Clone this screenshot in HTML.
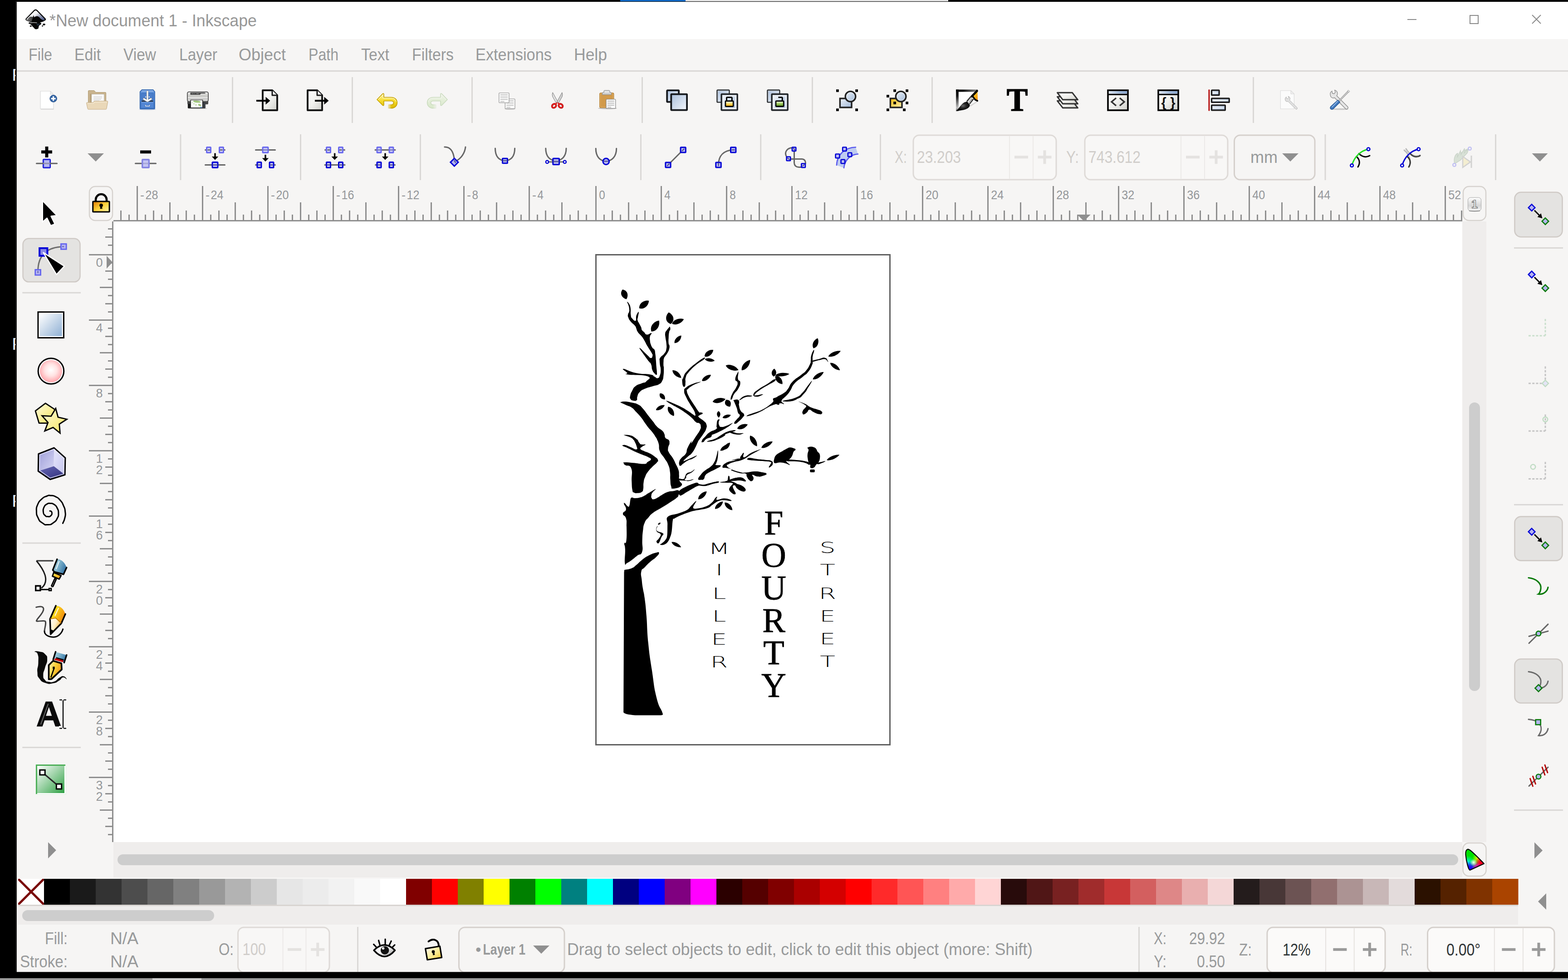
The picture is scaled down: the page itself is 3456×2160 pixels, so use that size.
<!DOCTYPE html>
<html lang="en"><head><meta charset="utf-8"><title>*New document 1 - Inkscape</title>
<style>
html,body{margin:0;padding:0;background:#000;width:3456px;height:2160px;overflow:hidden}
svg{display:block;font-family:"Liberation Sans", "DejaVu Sans", sans-serif}
</style></head>
<body>
<svg width="3456" height="2160" viewBox="0 0 3456 2160">
<defs>
<clipPath id="leftclip"><rect x="0" y="0" width="37" height="2160"/></clipPath>
<clipPath id="xclip"><rect x="40" y="1937" width="57" height="57"/></clipPath>

<linearGradient id="gBlue" x1="0" y1="0" x2="1" y2="1"><stop offset="0" stop-color="#a9bfdc"/><stop offset="1" stop-color="#f3f6fb"/></linearGradient>
<linearGradient id="gBlueR" x1="0" y1="0" x2="1" y2="1"><stop offset="0" stop-color="#eef3f9"/><stop offset="1" stop-color="#9fb7d6"/></linearGradient>
<linearGradient id="gPaper" x1="0" y1="0" x2="1" y2="1"><stop offset="0" stop-color="#ffffff"/><stop offset="0.5" stop-color="#f1f1ee"/><stop offset="1" stop-color="#cfcfca"/></linearGradient>
<linearGradient id="gYel" x1="0" y1="0" x2="0" y2="1"><stop offset="0" stop-color="#fff6a0"/><stop offset="0.5" stop-color="#f7dc2e"/><stop offset="1" stop-color="#d9b600"/></linearGradient>
<linearGradient id="gGrn" x1="0" y1="0" x2="0" y2="1"><stop offset="0" stop-color="#d9f0c0"/><stop offset="1" stop-color="#8ec860"/></linearGradient>
<linearGradient id="gLockY" x1="0" y1="0" x2="1" y2="1"><stop offset="0" stop-color="#e07800"/><stop offset="0.5" stop-color="#fdd23a"/><stop offset="1" stop-color="#fff6a8"/></linearGradient>
<linearGradient id="gLockS" x1="0" y1="0" x2="0" y2="1"><stop offset="0" stop-color="#ffffff"/><stop offset="0.45" stop-color="#ffe27a"/><stop offset="1" stop-color="#f5a800"/></linearGradient>
<linearGradient id="gLockG" x1="0" y1="0" x2="0" y2="1"><stop offset="0" stop-color="#ffffff"/><stop offset="0.45" stop-color="#a9d36b"/><stop offset="1" stop-color="#4e8a1a"/></linearGradient>
<linearGradient id="gYelSq" x1="0" y1="0" x2="1" y2="1"><stop offset="0" stop-color="#f3b90a"/><stop offset="1" stop-color="#ffefb0"/></linearGradient>
<linearGradient id="gFrame" x1="0" y1="0" x2="1" y2="0.75"><stop offset="0" stop-color="#000"/><stop offset="0.5" stop-color="#050505"/><stop offset="0.8" stop-color="#8a8a8a"/><stop offset="1" stop-color="#e8e8e8"/></linearGradient>
<linearGradient id="gFrT" x1="0" y1="0" x2="1" y2="0"><stop offset="0" stop-color="#000"/><stop offset="0.3" stop-color="#0a0a0a"/><stop offset="1" stop-color="#8c8c8c"/></linearGradient>
<linearGradient id="gFrL" x1="0" y1="0" x2="0" y2="1"><stop offset="0" stop-color="#000"/><stop offset="0.3" stop-color="#1a1a1a"/><stop offset="0.85" stop-color="#c4c4c4"/><stop offset="1" stop-color="#555"/></linearGradient>
<linearGradient id="gOrange2" x1="0" y1="0" x2="1" y2="1"><stop offset="0" stop-color="#ffe92a"/><stop offset="0.5" stop-color="#fbb81a"/><stop offset="1" stop-color="#f58a0a"/></linearGradient>
<linearGradient id="gFerr" x1="0" y1="0" x2="1" y2="0.6"><stop offset="0" stop-color="#555"/><stop offset="0.35" stop-color="#f0f0f0"/><stop offset="0.7" stop-color="#9a9a9a"/><stop offset="1" stop-color="#222"/></linearGradient>
<radialGradient id="gBrush" cx="0.5" cy="0.45" r="0.5"><stop offset="0" stop-color="#6a6a6a"/><stop offset="0.45" stop-color="#2a2a2a"/><stop offset="1" stop-color="#050505"/></radialGradient>
<linearGradient id="gPrn" x1="0" y1="0" x2="0" y2="1"><stop offset="0" stop-color="#f0f0f0"/><stop offset="0.45" stop-color="#c6c6c2"/><stop offset="0.62" stop-color="#e4e4e2"/><stop offset="1" stop-color="#bdbdbb"/></linearGradient>
<linearGradient id="gTitle" x1="0" y1="0" x2="1" y2="0"><stop offset="0" stop-color="#dfe8f4"/><stop offset="0.6" stop-color="#9db6d8"/><stop offset="1" stop-color="#8aa7cf"/></linearGradient>
<linearGradient id="gRectTool" x1="0" y1="0" x2="1" y2="1"><stop offset="0" stop-color="#ffffff"/><stop offset="1" stop-color="#8fb0d4"/></linearGradient>
<radialGradient id="gCirc" cx="0.5" cy="0.45" r="0.6"><stop offset="0" stop-color="#ffffff"/><stop offset="0.45" stop-color="#ffe3e3"/><stop offset="1" stop-color="#ff9aa2"/></radialGradient>
<linearGradient id="gStar" x1="0" y1="0" x2="1" y2="1"><stop offset="0" stop-color="#fffde0"/><stop offset="1" stop-color="#f5e25a"/></linearGradient>
<linearGradient id="gGrad" x1="0" y1="0" x2="1" y2="1"><stop offset="0" stop-color="#ffffff"/><stop offset="1" stop-color="#2ea043"/></linearGradient>
<linearGradient id="gMetal" x1="0" y1="0" x2="1" y2="0"><stop offset="0" stop-color="#f2f2f2"/><stop offset="1" stop-color="#a8a8a8"/></linearGradient>
<linearGradient id="gBtn" x1="0" y1="0" x2="0" y2="1"><stop offset="0" stop-color="#ffffff"/><stop offset="1" stop-color="#cfcfcf"/></linearGradient>
<linearGradient id="gFade" x1="0" y1="0" x2="1" y2="0"><stop offset="0" stop-color="#f6f5f4" stop-opacity="1"/><stop offset="1" stop-color="#f6f5f4" stop-opacity="0"/></linearGradient>
<linearGradient id="gSky" x1="0" y1="0" x2="1" y2="1"><stop offset="0" stop-color="#cfe6f2"/><stop offset="1" stop-color="#4e8fb0"/></linearGradient>
<linearGradient id="gSkyH" x1="0" y1="0" x2="1" y2="0.4"><stop offset="0" stop-color="#b5dbe6"/><stop offset="0.5" stop-color="#7fb4cc"/><stop offset="1" stop-color="#3a78a8"/></linearGradient>
<linearGradient id="gPencil" x1="0" y1="0" x2="1" y2="0.5"><stop offset="0" stop-color="#f4ff2a"/><stop offset="0.45" stop-color="#fbd21a"/><stop offset="1" stop-color="#f08a10"/></linearGradient>
<linearGradient id="gWood" x1="0" y1="0" x2="1" y2="0.6"><stop offset="0" stop-color="#ffffff"/><stop offset="0.5" stop-color="#fff0c8"/><stop offset="1" stop-color="#f5a81a"/></linearGradient>
<linearGradient id="gNib" x1="0" y1="0" x2="1" y2="0.5"><stop offset="0" stop-color="#fff8c0"/><stop offset="0.5" stop-color="#fbd23a"/><stop offset="1" stop-color="#f09a1a"/></linearGradient>
<linearGradient id="gOrange" x1="0" y1="0" x2="1" y2="1"><stop offset="0" stop-color="#fff35a"/><stop offset="1" stop-color="#f09000"/></linearGradient>
<linearGradient id="gBoxL" x1="0" y1="0" x2="1" y2="1"><stop offset="0" stop-color="#9a9ad6"/><stop offset="1" stop-color="#d6d6f4"/></linearGradient>
<linearGradient id="gBoxR" x1="0" y1="0" x2="1" y2="1"><stop offset="0" stop-color="#e6e6fb"/><stop offset="1" stop-color="#c4c4ee"/></linearGradient>
<linearGradient id="gBoxB" x1="0" y1="0" x2="1" y2="1"><stop offset="0" stop-color="#6a6ab8"/><stop offset="1" stop-color="#2c2c78"/></linearGradient>

<linearGradient id="gLogoG" x1="0" y1="0" x2="1" y2="0"><stop offset="0" stop-color="#7a7a7a"/><stop offset="1" stop-color="#3a3a3a"/></linearGradient>
<linearGradient id="gLogo" x1="0.1" y1="0.2" x2="1" y2="0.9"><stop offset="0" stop-color="#ffffff"/><stop offset="0.35" stop-color="#f2f2f4"/><stop offset="0.6" stop-color="#9aa0b8"/><stop offset="0.85" stop-color="#5a6690"/><stop offset="1" stop-color="#222838"/></linearGradient>
<linearGradient id="gBtn1" x1="0" y1="0" x2="0" y2="1"><stop offset="0" stop-color="#fdfdfd"/><stop offset="0.6" stop-color="#d6d6d6"/><stop offset="1" stop-color="#f6f6f6"/></linearGradient>
<radialGradient id="rCy"><stop offset="0" stop-color="#00ffff"/><stop offset="1" stop-color="#00ffff" stop-opacity="0"/></radialGradient>
<radialGradient id="rYe"><stop offset="0" stop-color="#ffff00"/><stop offset="1" stop-color="#ffff00" stop-opacity="0"/></radialGradient>
<radialGradient id="rRe"><stop offset="0" stop-color="#ff0020"/><stop offset="0.5" stop-color="#ff0020"/><stop offset="1" stop-color="#ff0020" stop-opacity="0"/></radialGradient>
<radialGradient id="rBl"><stop offset="0" stop-color="#1000ff"/><stop offset="0.45" stop-color="#2010ff"/><stop offset="1" stop-color="#2010ff" stop-opacity="0"/></radialGradient>
<radialGradient id="rMa"><stop offset="0" stop-color="#ff00e0"/><stop offset="1" stop-color="#ff00e0" stop-opacity="0"/></radialGradient>
<radialGradient id="rWh"><stop offset="0" stop-color="#ffffff"/><stop offset="1" stop-color="#ffffff" stop-opacity="0"/></radialGradient>
<linearGradient id="gEye" x1="0" y1="0" x2="1" y2="1"><stop offset="0" stop-color="#ffffff"/><stop offset="0.5" stop-color="#f0f0f0"/><stop offset="1" stop-color="#8a8a8a"/></linearGradient>
<linearGradient id="gLockO" x1="0" y1="0" x2="1" y2="1"><stop offset="0" stop-color="#ffffff"/><stop offset="0.6" stop-color="#fbe88a"/><stop offset="1" stop-color="#eec22a"/></linearGradient>
<linearGradient id="gCms" x1="0" y1="0" x2="1" y2="0"><stop offset="0" stop-color="#00d000"/><stop offset="0.35" stop-color="#30ff30"/><stop offset="0.6" stop-color="#ffff40"/><stop offset="0.8" stop-color="#ff3030"/><stop offset="1" stop-color="#d000d0"/></linearGradient>
<linearGradient id="gCms2" x1="0" y1="0" x2="0" y2="1"><stop offset="0" stop-color="#00c000" stop-opacity="0.9"/><stop offset="0.55" stop-color="#ffffff" stop-opacity="0.3"/><stop offset="1" stop-color="#1020ff" stop-opacity="1"/></linearGradient>

</defs>
<rect x="0" y="0" width="3456" height="2160" fill="#000" />
<rect x="1367" y="0" width="144" height="3" fill="#1168c4" />
<rect x="1511" y="0" width="579" height="3" fill="#e4e4e4" />
<text x="26.5" y="177.7" font-size="36" fill="#fff" font-family='"Liberation Sans", "DejaVu Sans", sans-serif' clip-path="url(#leftclip)">F</text>
<text x="26.5" y="771" font-size="36" fill="#fff" font-family='"Liberation Sans", "DejaVu Sans", sans-serif' clip-path="url(#leftclip)">F</text>
<text x="26.5" y="1116.7" font-size="36" fill="#fff" font-family='"Liberation Sans", "DejaVu Sans", sans-serif' clip-path="url(#leftclip)">F</text>
<rect x="34" y="3" width="3" height="2142" fill="#1c1c1c" />
<rect x="37" y="4" width="3419" height="82" fill="#fff" />
<rect x="37" y="86" width="3419" height="2057" fill="#f6f5f4" />
<rect x="37" y="155" width="3419" height="3" fill="#dad8d6" />
<text x="109" y="58" font-size="36" fill="#979797" textLength="457" lengthAdjust="spacingAndGlyphs" font-family='"Liberation Sans", "DejaVu Sans", sans-serif' >*New document 1 - Inkscape</text>
<rect x="3102" y="42" width="20" height="2" fill="#8a8a8a" />
<rect x="3240" y="34" width="18" height="18" fill="none" stroke="#8a8a8a" stroke-width="2" />
<path d="M3377 33 L3396 52 M3396 33 L3377 52" fill="none" stroke="#8a8a8a" stroke-width="2" />
<text x="63" y="133" font-size="36" fill="#989a9b" textLength="52" lengthAdjust="spacingAndGlyphs" font-family='"Liberation Sans", "DejaVu Sans", sans-serif' >File</text>
<text x="164" y="133" font-size="36" fill="#989a9b" textLength="58" lengthAdjust="spacingAndGlyphs" font-family='"Liberation Sans", "DejaVu Sans", sans-serif' >Edit</text>
<text x="272" y="133" font-size="36" fill="#989a9b" textLength="72" lengthAdjust="spacingAndGlyphs" font-family='"Liberation Sans", "DejaVu Sans", sans-serif' >View</text>
<text x="395" y="133" font-size="36" fill="#989a9b" textLength="84" lengthAdjust="spacingAndGlyphs" font-family='"Liberation Sans", "DejaVu Sans", sans-serif' >Layer</text>
<text x="526" y="133" font-size="36" fill="#989a9b" textLength="104" lengthAdjust="spacingAndGlyphs" font-family='"Liberation Sans", "DejaVu Sans", sans-serif' >Object</text>
<text x="680" y="133" font-size="36" fill="#989a9b" textLength="66" lengthAdjust="spacingAndGlyphs" font-family='"Liberation Sans", "DejaVu Sans", sans-serif' >Path</text>
<text x="796" y="133" font-size="36" fill="#989a9b" textLength="62" lengthAdjust="spacingAndGlyphs" font-family='"Liberation Sans", "DejaVu Sans", sans-serif' >Text</text>
<text x="908" y="133" font-size="36" fill="#989a9b" textLength="92" lengthAdjust="spacingAndGlyphs" font-family='"Liberation Sans", "DejaVu Sans", sans-serif' >Filters</text>
<text x="1048" y="133" font-size="36" fill="#989a9b" textLength="168" lengthAdjust="spacingAndGlyphs" font-family='"Liberation Sans", "DejaVu Sans", sans-serif' >Extensions</text>
<text x="1265" y="133" font-size="36" fill="#989a9b" textLength="73" lengthAdjust="spacingAndGlyphs" font-family='"Liberation Sans", "DejaVu Sans", sans-serif' >Help</text>
<rect x="511.0" y="170" width="3" height="101" fill="#dad8d6" />
<rect x="775.0" y="170" width="3" height="101" fill="#dad8d6" />
<rect x="1039.0" y="170" width="3" height="101" fill="#dad8d6" />
<rect x="1414.0" y="170" width="3" height="101" fill="#dad8d6" />
<rect x="1789.0" y="170" width="3" height="101" fill="#dad8d6" />
<rect x="2053.0" y="170" width="3" height="101" fill="#dad8d6" />
<rect x="2761.0" y="170" width="3" height="101" fill="#dad8d6" />
<rect x="396.5" y="296" width="3" height="101" fill="#dad8d6" />
<rect x="661.0" y="296" width="3" height="101" fill="#dad8d6" />
<rect x="925.0" y="296" width="3" height="101" fill="#dad8d6" />
<rect x="1411.0" y="296" width="3" height="101" fill="#dad8d6" />
<rect x="1675.2" y="296" width="3" height="101" fill="#dad8d6" />
<rect x="1939.0" y="296" width="3" height="101" fill="#dad8d6" />
<rect x="2919.5" y="296" width="3" height="101" fill="#dad8d6" />
<rect x="3295.0" y="296" width="3" height="101" fill="#dad8d6" />
<text x="1972" y="359" font-size="36" fill="#d0cdca" textLength="27" lengthAdjust="spacingAndGlyphs" font-family='"Liberation Sans", "DejaVu Sans", sans-serif' >X:</text>
<rect x="2013" y="298" width="315" height="98" fill="#f8f7f6" rx="13" stroke="#dedad7" stroke-width="3" />
<rect x="2224" y="299" width="2" height="96" fill="#eceae8" />
<rect x="2276" y="299" width="2" height="96" fill="#eceae8" />
<text x="2021" y="359" font-size="36" fill="#d0cdca" textLength="97" lengthAdjust="spacingAndGlyphs" font-family='"Liberation Sans", "DejaVu Sans", sans-serif' >23.203</text>
<rect x="2236.0" y="343.3" width="30" height="6" fill="#e4e2e0" />
<rect x="2287.5" y="343.3" width="30" height="6" fill="#e4e2e0" />
<rect x="2299.5" y="331.3" width="6" height="30" fill="#e4e2e0" />
<text x="2350" y="359" font-size="36" fill="#d0cdca" textLength="28" lengthAdjust="spacingAndGlyphs" font-family='"Liberation Sans", "DejaVu Sans", sans-serif' >Y:</text>
<rect x="2391" y="298" width="315" height="98" fill="#f8f7f6" rx="13" stroke="#dedad7" stroke-width="3" />
<rect x="2602" y="299" width="2" height="96" fill="#eceae8" />
<rect x="2654" y="299" width="2" height="96" fill="#eceae8" />
<text x="2399" y="359" font-size="36" fill="#d0cdca" textLength="115" lengthAdjust="spacingAndGlyphs" font-family='"Liberation Sans", "DejaVu Sans", sans-serif' >743.612</text>
<rect x="2614.0" y="343.3" width="30" height="6" fill="#e4e2e0" />
<rect x="2665.5" y="343.3" width="30" height="6" fill="#e4e2e0" />
<rect x="2677.5" y="331.3" width="6" height="30" fill="#e4e2e0" />
<rect x="2720.5" y="298" width="177.5" height="98" fill="#f6f5f4" rx="13" stroke="#d5d0cc" stroke-width="3" />
<text x="2756" y="359" font-size="36" fill="#989a9b" textLength="60" lengthAdjust="spacingAndGlyphs" font-family='"Liberation Sans", "DejaVu Sans", sans-serif' >mm</text>
<path d="M2826 338 h36 l-18 18z" fill="#8f8f8f" />
<rect x="250" y="488" width="2973" height="1368" fill="#fff" />
<rect x="250" y="485" width="2973" height="3" fill="#8f8f8f" />
<rect x="247" y="488" width="3" height="1368" fill="#8f8f8f" />
<rect x="197" y="411" width="51" height="75" fill="#f6f5f4" rx="13" stroke="#d6d2ce" stroke-width="2.5" />
<path d="M266.5 464V486M284.5 473V486M302.5 410V486M320.5 473V486M338.5 464V486M356.5 473V486M374.5 446V486M392.5 473V486M410.5 464V486M428.5 473V486M446.5 410V486M464.5 473V486M482.5 464V486M500.5 473V486M518.5 446V486M536.5 473V486M554.5 464V486M572.5 473V486M590.5 410V486M608.5 473V486M626.5 464V486M644.5 473V486M662.5 446V486M680.5 473V486M698.5 464V486M716.5 473V486M734.5 410V486M752.5 473V486M770.5 464V486M788.5 473V486M806.5 446V486M824.5 473V486M842.5 464V486M860.5 473V486M878.5 410V486M896.5 473V486M914.5 464V486M932.5 473V486M950.5 446V486M968.5 473V486M986.5 464V486M1004.5 473V486M1022.5 410V486M1040.5 473V486M1058.5 464V486M1076.5 473V486M1094.5 446V486M1112.5 473V486M1130.5 464V486M1148.5 473V486M1166.5 410V486M1184.5 473V486M1202.5 464V486M1220.5 473V486M1238.5 446V486M1256.5 473V486M1274.5 464V486M1292.5 473V486M1313.5 410V486M1331.5 473V486M1349.5 464V486M1367.5 473V486M1385.5 446V486M1403.5 473V486M1421.5 464V486M1439.5 473V486M1457.5 410V486M1475.5 473V486M1493.5 464V486M1511.5 473V486M1529.5 446V486M1547.5 473V486M1565.5 464V486M1583.5 473V486M1601.5 410V486M1619.5 473V486M1637.5 464V486M1655.5 473V486M1673.5 446V486M1691.5 473V486M1709.5 464V486M1727.5 473V486M1745.5 410V486M1763.5 473V486M1781.5 464V486M1799.5 473V486M1817.5 446V486M1835.5 473V486M1853.5 464V486M1871.5 473V486M1889.5 410V486M1907.5 473V486M1925.5 464V486M1943.5 473V486M1961.5 446V486M1979.5 473V486M1997.5 464V486M2015.5 473V486M2033.5 410V486M2051.5 473V486M2069.5 464V486M2087.5 473V486M2105.5 446V486M2123.5 473V486M2141.5 464V486M2159.5 473V486M2177.5 410V486M2195.5 473V486M2213.5 464V486M2231.5 473V486M2249.5 446V486M2267.5 473V486M2285.5 464V486M2303.5 473V486M2321.5 410V486M2339.5 473V486M2357.5 464V486M2375.5 473V486M2393.5 446V486M2411.5 473V486M2429.5 464V486M2447.5 473V486M2465.5 410V486M2483.5 473V486M2501.5 464V486M2519.5 473V486M2537.5 446V486M2555.5 473V486M2573.5 464V486M2591.5 473V486M2609.5 410V486M2627.5 473V486M2645.5 464V486M2663.5 473V486M2681.5 446V486M2699.5 473V486M2717.5 464V486M2735.5 473V486M2753.5 410V486M2771.5 473V486M2789.5 464V486M2807.5 473V486M2825.5 446V486M2843.5 473V486M2861.5 464V486M2879.5 473V486M2897.5 410V486M2915.5 473V486M2933.5 464V486M2951.5 473V486M2969.5 446V486M2987.5 473V486M3005.5 464V486M3023.5 473V486M3041.5 410V486M3059.5 473V486M3077.5 464V486M3095.5 473V486M3113.5 446V486M3131.5 473V486M3149.5 464V486M3167.5 473V486M3185.5 410V486M3203.5 473V486M3221.5 464V486" fill="none" stroke="#8f8f8f" stroke-width="3" />
<text x="309.0" y="438.8" font-size="27" fill="#94979a" font-family='"Liberation Sans", "DejaVu Sans", sans-serif' >-</text>
<text x="320.5" y="438.8" font-size="27" fill="#94979a" textLength="28.0" lengthAdjust="spacingAndGlyphs" font-family='"Liberation Sans", "DejaVu Sans", sans-serif' >28</text>
<text x="453.0" y="438.8" font-size="27" fill="#94979a" font-family='"Liberation Sans", "DejaVu Sans", sans-serif' >-</text>
<text x="464.5" y="438.8" font-size="27" fill="#94979a" textLength="28.0" lengthAdjust="spacingAndGlyphs" font-family='"Liberation Sans", "DejaVu Sans", sans-serif' >24</text>
<text x="597.0" y="438.8" font-size="27" fill="#94979a" font-family='"Liberation Sans", "DejaVu Sans", sans-serif' >-</text>
<text x="608.5" y="438.8" font-size="27" fill="#94979a" textLength="28.0" lengthAdjust="spacingAndGlyphs" font-family='"Liberation Sans", "DejaVu Sans", sans-serif' >20</text>
<text x="741.0" y="438.8" font-size="27" fill="#94979a" font-family='"Liberation Sans", "DejaVu Sans", sans-serif' >-</text>
<text x="752.5" y="438.8" font-size="27" fill="#94979a" textLength="28.0" lengthAdjust="spacingAndGlyphs" font-family='"Liberation Sans", "DejaVu Sans", sans-serif' >16</text>
<text x="885.0" y="438.8" font-size="27" fill="#94979a" font-family='"Liberation Sans", "DejaVu Sans", sans-serif' >-</text>
<text x="896.5" y="438.8" font-size="27" fill="#94979a" textLength="28.0" lengthAdjust="spacingAndGlyphs" font-family='"Liberation Sans", "DejaVu Sans", sans-serif' >12</text>
<text x="1029.0" y="438.8" font-size="27" fill="#94979a" font-family='"Liberation Sans", "DejaVu Sans", sans-serif' >-</text>
<text x="1040.5" y="438.8" font-size="27" fill="#94979a" textLength="13.5" lengthAdjust="spacingAndGlyphs" font-family='"Liberation Sans", "DejaVu Sans", sans-serif' >8</text>
<text x="1173.0" y="438.8" font-size="27" fill="#94979a" font-family='"Liberation Sans", "DejaVu Sans", sans-serif' >-</text>
<text x="1184.5" y="438.8" font-size="27" fill="#94979a" textLength="13.5" lengthAdjust="spacingAndGlyphs" font-family='"Liberation Sans", "DejaVu Sans", sans-serif' >4</text>
<text x="1320.3" y="438.8" font-size="27" fill="#94979a" textLength="13.5" lengthAdjust="spacingAndGlyphs" font-family='"Liberation Sans", "DejaVu Sans", sans-serif' >0</text>
<text x="1464.3" y="438.8" font-size="27" fill="#94979a" textLength="13.5" lengthAdjust="spacingAndGlyphs" font-family='"Liberation Sans", "DejaVu Sans", sans-serif' >4</text>
<text x="1608.3" y="438.8" font-size="27" fill="#94979a" textLength="13.5" lengthAdjust="spacingAndGlyphs" font-family='"Liberation Sans", "DejaVu Sans", sans-serif' >8</text>
<text x="1752.3" y="438.8" font-size="27" fill="#94979a" textLength="28.0" lengthAdjust="spacingAndGlyphs" font-family='"Liberation Sans", "DejaVu Sans", sans-serif' >12</text>
<text x="1896.3" y="438.8" font-size="27" fill="#94979a" textLength="28.0" lengthAdjust="spacingAndGlyphs" font-family='"Liberation Sans", "DejaVu Sans", sans-serif' >16</text>
<text x="2040.3" y="438.8" font-size="27" fill="#94979a" textLength="28.0" lengthAdjust="spacingAndGlyphs" font-family='"Liberation Sans", "DejaVu Sans", sans-serif' >20</text>
<text x="2184.3" y="438.8" font-size="27" fill="#94979a" textLength="28.0" lengthAdjust="spacingAndGlyphs" font-family='"Liberation Sans", "DejaVu Sans", sans-serif' >24</text>
<text x="2328.3" y="438.8" font-size="27" fill="#94979a" textLength="28.0" lengthAdjust="spacingAndGlyphs" font-family='"Liberation Sans", "DejaVu Sans", sans-serif' >28</text>
<text x="2472.3" y="438.8" font-size="27" fill="#94979a" textLength="28.0" lengthAdjust="spacingAndGlyphs" font-family='"Liberation Sans", "DejaVu Sans", sans-serif' >32</text>
<text x="2616.3" y="438.8" font-size="27" fill="#94979a" textLength="28.0" lengthAdjust="spacingAndGlyphs" font-family='"Liberation Sans", "DejaVu Sans", sans-serif' >36</text>
<text x="2760.3" y="438.8" font-size="27" fill="#94979a" textLength="28.0" lengthAdjust="spacingAndGlyphs" font-family='"Liberation Sans", "DejaVu Sans", sans-serif' >40</text>
<text x="2904.3" y="438.8" font-size="27" fill="#94979a" textLength="28.0" lengthAdjust="spacingAndGlyphs" font-family='"Liberation Sans", "DejaVu Sans", sans-serif' >44</text>
<text x="3048.3" y="438.8" font-size="27" fill="#94979a" textLength="28.0" lengthAdjust="spacingAndGlyphs" font-family='"Liberation Sans", "DejaVu Sans", sans-serif' >48</text>
<text x="3192.3" y="438.8" font-size="27" fill="#94979a" textLength="28.0" lengthAdjust="spacingAndGlyphs" font-family='"Liberation Sans", "DejaVu Sans", sans-serif' >52</text>
<path d="M2374.3 473H2403.7L2389 487.5Z" fill="#8f8f8f" />
<path d="M238 504.5H248M232 522.5H248M238 540.5H248M196 561.5H248M238 579.5H248M232 597.5H248M238 615.5H248M220 633.5H248M238 651.5H248M232 669.5H248M238 687.5H248M196 705.5H248M238 723.5H248M232 741.5H248M238 759.5H248M220 777.5H248M238 795.5H248M232 813.5H248M238 831.5H248M196 849.5H248M238 867.5H248M232 885.5H248M238 903.5H248M220 921.5H248M238 939.5H248M232 957.5H248M238 975.5H248M196 993.5H248M238 1011.5H248M232 1029.5H248M238 1047.5H248M220 1065.5H248M238 1083.5H248M232 1101.5H248M238 1119.5H248M196 1137.5H248M238 1155.5H248M232 1173.5H248M238 1191.5H248M220 1209.5H248M238 1227.5H248M232 1245.5H248M238 1263.5H248M196 1281.5H248M238 1299.5H248M232 1317.5H248M238 1335.5H248M220 1353.5H248M238 1371.5H248M232 1389.5H248M238 1407.5H248M196 1425.5H248M238 1443.5H248M232 1461.5H248M238 1479.5H248M220 1497.5H248M238 1515.5H248M232 1533.5H248M238 1551.5H248M196 1569.5H248M238 1587.5H248M232 1605.5H248M238 1623.5H248M220 1641.5H248M238 1659.5H248M232 1677.5H248M238 1695.5H248M196 1713.5H248M238 1731.5H248M232 1749.5H248M238 1767.5H248M220 1785.5H248M238 1803.5H248M232 1821.5H248M238 1839.5H248" fill="none" stroke="#8f8f8f" stroke-width="3" />
<text x='219' y='587.5' font-size='27' fill='#94979a' text-anchor='middle' font-family='"Liberation Sans", "DejaVu Sans", sans-serif'>0</text>
<text x='219' y='731.5' font-size='27' fill='#94979a' text-anchor='middle' font-family='"Liberation Sans", "DejaVu Sans", sans-serif'>4</text>
<text x='219' y='875.5' font-size='27' fill='#94979a' text-anchor='middle' font-family='"Liberation Sans", "DejaVu Sans", sans-serif'>8</text>
<text x='219 219' y='1019.5 1045.0' font-size='27' fill='#94979a' text-anchor='middle' font-family='"Liberation Sans", "DejaVu Sans", sans-serif'>12</text>
<text x='219 219' y='1163.5 1189.0' font-size='27' fill='#94979a' text-anchor='middle' font-family='"Liberation Sans", "DejaVu Sans", sans-serif'>16</text>
<text x='219 219' y='1307.5 1333.0' font-size='27' fill='#94979a' text-anchor='middle' font-family='"Liberation Sans", "DejaVu Sans", sans-serif'>20</text>
<text x='219 219' y='1451.5 1477.0' font-size='27' fill='#94979a' text-anchor='middle' font-family='"Liberation Sans", "DejaVu Sans", sans-serif'>24</text>
<text x='219 219' y='1595.5 1621.0' font-size='27' fill='#94979a' text-anchor='middle' font-family='"Liberation Sans", "DejaVu Sans", sans-serif'>28</text>
<text x='219 219' y='1739.5 1765.0' font-size='27' fill='#94979a' text-anchor='middle' font-family='"Liberation Sans", "DejaVu Sans", sans-serif'>32</text>
<path d="M235 564 v28 l13 -14z" fill="#8f8f8f" />
<rect x="250" y="1856" width="2973" height="78" fill="#efedec" />
<rect x="259" y="1883" width="2955" height="24" fill="#cdcdcd" rx="12" />
<rect x="3223" y="488" width="53" height="1368" fill="#efedec" />
<rect x="3238" y="887" width="24" height="636" fill="#cdcdcd" rx="12" />
<rect x="3225" y="411" width="50" height="75" fill="#f6f5f4" rx="13" stroke="#d6d2ce" stroke-width="2.5" />
<rect x="3224.5" y="1858" width="51" height="73" fill="#f6f5f4" rx="13" stroke="#d6d2ce" stroke-width="2.5" />
<rect x="37" y="1934" width="3312" height="3" fill="#f6f5f4" />
<rect x="40" y="1937" width="57" height="57" fill="#fff" />
<path d="M40 1937L97 1994M97 1937L40 1994" fill="none" stroke="#7a0a0a" stroke-width="5" clip-path="url(#xclip)"/>
<rect x="97" y="1937" width="57.5" height="57" fill="#000000" />
<rect x="154" y="1937" width="57.5" height="57" fill="#1a1a1a" />
<rect x="211" y="1937" width="57.5" height="57" fill="#333333" />
<rect x="268" y="1937" width="57.5" height="57" fill="#4d4d4d" />
<rect x="325" y="1937" width="57.5" height="57" fill="#666666" />
<rect x="382" y="1937" width="57.5" height="57" fill="#808080" />
<rect x="439" y="1937" width="57.5" height="57" fill="#999999" />
<rect x="496" y="1937" width="57.5" height="57" fill="#b3b3b3" />
<rect x="553" y="1937" width="57.5" height="57" fill="#cccccc" />
<rect x="610" y="1937" width="57.5" height="57" fill="#e6e6e6" />
<rect x="667" y="1937" width="57.5" height="57" fill="#ececec" />
<rect x="724" y="1937" width="57.5" height="57" fill="#f2f2f2" />
<rect x="781" y="1937" width="57.5" height="57" fill="#f9f9f9" />
<rect x="838" y="1937" width="57.5" height="57" fill="#ffffff" />
<rect x="895" y="1937" width="57.5" height="57" fill="#800000" />
<rect x="952" y="1937" width="57.5" height="57" fill="#ff0000" />
<rect x="1009" y="1937" width="57.5" height="57" fill="#808000" />
<rect x="1066" y="1937" width="57.5" height="57" fill="#ffff00" />
<rect x="1123" y="1937" width="57.5" height="57" fill="#008000" />
<rect x="1180" y="1937" width="57.5" height="57" fill="#00ff00" />
<rect x="1237" y="1937" width="57.5" height="57" fill="#008080" />
<rect x="1294" y="1937" width="57.5" height="57" fill="#00ffff" />
<rect x="1351" y="1937" width="57.5" height="57" fill="#000080" />
<rect x="1408" y="1937" width="57.5" height="57" fill="#0000ff" />
<rect x="1465" y="1937" width="57.5" height="57" fill="#800080" />
<rect x="1522" y="1937" width="57.5" height="57" fill="#ff00ff" />
<rect x="1579" y="1937" width="57.5" height="57" fill="#2b0000" />
<rect x="1636" y="1937" width="57.5" height="57" fill="#550000" />
<rect x="1693" y="1937" width="57.5" height="57" fill="#800000" />
<rect x="1750" y="1937" width="57.5" height="57" fill="#aa0000" />
<rect x="1807" y="1937" width="57.5" height="57" fill="#d40000" />
<rect x="1864" y="1937" width="57.5" height="57" fill="#ff0000" />
<rect x="1921" y="1937" width="57.5" height="57" fill="#ff2a2a" />
<rect x="1978" y="1937" width="57.5" height="57" fill="#ff5555" />
<rect x="2035" y="1937" width="57.5" height="57" fill="#ff8080" />
<rect x="2092" y="1937" width="57.5" height="57" fill="#ffaaaa" />
<rect x="2149" y="1937" width="57.5" height="57" fill="#ffd5d5" />
<rect x="2206" y="1937" width="57.5" height="57" fill="#280b0b" />
<rect x="2263" y="1937" width="57.5" height="57" fill="#501616" />
<rect x="2320" y="1937" width="57.5" height="57" fill="#782121" />
<rect x="2377" y="1937" width="57.5" height="57" fill="#a02c2c" />
<rect x="2434" y="1937" width="57.5" height="57" fill="#c83737" />
<rect x="2491" y="1937" width="57.5" height="57" fill="#d35f5f" />
<rect x="2548" y="1937" width="57.5" height="57" fill="#de8787" />
<rect x="2605" y="1937" width="57.5" height="57" fill="#e9afaf" />
<rect x="2662" y="1937" width="57.5" height="57" fill="#f4d7d7" />
<rect x="2719" y="1937" width="57.5" height="57" fill="#241c1c" />
<rect x="2776" y="1937" width="57.5" height="57" fill="#483737" />
<rect x="2833" y="1937" width="57.5" height="57" fill="#6c5353" />
<rect x="2890" y="1937" width="57.5" height="57" fill="#916f6f" />
<rect x="2947" y="1937" width="57.5" height="57" fill="#ac9393" />
<rect x="3004" y="1937" width="57.5" height="57" fill="#c8b7b7" />
<rect x="3061" y="1937" width="57.5" height="57" fill="#e3dbdb" />
<rect x="3118" y="1937" width="57.5" height="57" fill="#2b1100" />
<rect x="3175" y="1937" width="57.5" height="57" fill="#552200" />
<rect x="3232" y="1937" width="57.5" height="57" fill="#803300" />
<rect x="3289" y="1937" width="57.5" height="57" fill="#aa4400" />
<rect x="40" y="1994" width="3306" height="3" fill="#d8d4d1" />
<rect x="40" y="1997" width="3306" height="41" fill="#efedec" />
<rect x="49" y="2006" width="423" height="24" fill="#cdcdcd" rx="12" />
<path d="M3408 1969 v36 l-18 -18z" fill="#8f8f8f" />
<text x="149" y="2081" font-size="36" fill="#989a9b" text-anchor="end" textLength="50" lengthAdjust="spacingAndGlyphs" font-family='"Liberation Sans", "DejaVu Sans", sans-serif' >Fill:</text>
<text x="149" y="2132" font-size="36" fill="#989a9b" text-anchor="end" textLength="105" lengthAdjust="spacingAndGlyphs" font-family='"Liberation Sans", "DejaVu Sans", sans-serif' >Stroke:</text>
<text x="243" y="2081" font-size="36" fill="#989a9b" textLength="62" lengthAdjust="spacingAndGlyphs" font-family='"Liberation Sans", "DejaVu Sans", sans-serif' >N/A</text>
<text x="243" y="2132" font-size="36" fill="#989a9b" textLength="62" lengthAdjust="spacingAndGlyphs" font-family='"Liberation Sans", "DejaVu Sans", sans-serif' >N/A</text>
<text x="482" y="2105" font-size="36" fill="#989a9b" textLength="33" lengthAdjust="spacingAndGlyphs" font-family='"Liberation Sans", "DejaVu Sans", sans-serif' >O:</text>
<rect x="524.5" y="2043.9" width="201.5" height="99.2" fill="#f8f7f6" rx="13" stroke="#dedad7" stroke-width="3" />
<rect x="622.5" y="2044.9" width="2" height="97.2" fill="#eceae8" />
<rect x="673.5" y="2044.9" width="2" height="97.2" fill="#eceae8" />
<text x="534.5" y="2105" font-size="36" fill="#d0cdca" textLength="51.5" lengthAdjust="spacingAndGlyphs" font-family='"Liberation Sans", "DejaVu Sans", sans-serif' >100</text>
<rect x="634.0" y="2089.8" width="30" height="6" fill="#e4e2e0" />
<rect x="685.25" y="2089.8" width="30" height="6" fill="#e4e2e0" />
<rect x="697.25" y="2077.8" width="6" height="30" fill="#e4e2e0" />
<rect x="787" y="2043" width="3" height="99" fill="#dad8d6" />
<rect x="1011.5" y="2043.9" width="232.5" height="99.2" fill="#f6f5f4" rx="13" stroke="#d5d0cc" stroke-width="3" />
<text x="1048.5" y="2104" font-size="33" fill="#989a9b" font-weight="bold" font-family='"Liberation Sans", "DejaVu Sans", sans-serif' >•</text>
<text x="1064.5" y="2104" font-size="34" fill="#989a9b" font-weight="bold" textLength="93.5" lengthAdjust="spacingAndGlyphs" font-family='"Liberation Sans", "DejaVu Sans", sans-serif' >Layer 1</text>
<path d="M1175 2084 h36 l-18 18z" fill="#8f8f8f" />
<text x="1250" y="2105" font-size="36" fill="#989a9b" textLength="1026" lengthAdjust="spacingAndGlyphs" font-family='"Liberation Sans", "DejaVu Sans", sans-serif' >Drag to select objects to edit, click to edit this object (more: Shift)</text>
<rect x="2509" y="2043" width="3" height="99" fill="#dad8d6" />
<text x="2543" y="2081" font-size="36" fill="#989a9b" textLength="28" lengthAdjust="spacingAndGlyphs" font-family='"Liberation Sans", "DejaVu Sans", sans-serif' >X:</text>
<text x="2543" y="2132" font-size="36" fill="#989a9b" textLength="28" lengthAdjust="spacingAndGlyphs" font-family='"Liberation Sans", "DejaVu Sans", sans-serif' >Y:</text>
<text x="2700" y="2081" font-size="36" fill="#989a9b" text-anchor="end" textLength="79" lengthAdjust="spacingAndGlyphs" font-family='"Liberation Sans", "DejaVu Sans", sans-serif' >29.92</text>
<text x="2700" y="2132" font-size="36" fill="#989a9b" text-anchor="end" textLength="62" lengthAdjust="spacingAndGlyphs" font-family='"Liberation Sans", "DejaVu Sans", sans-serif' >0.50</text>
<text x="2731" y="2106" font-size="36" fill="#989a9b" textLength="28" lengthAdjust="spacingAndGlyphs" font-family='"Liberation Sans", "DejaVu Sans", sans-serif' >Z:</text>
<rect x="2792.9" y="2043.9" width="260.1" height="99.2" fill="#fbfaf9" rx="13" stroke="#d5d0cc" stroke-width="3" />
<rect x="2921" y="2044.9" width="2" height="97.2" fill="#e6e3e0" />
<rect x="2983.7" y="2044.9" width="2" height="97.2" fill="#e6e3e0" />
<text x="2827" y="2105.5" font-size="36" fill="#2e3436" textLength="61.5" lengthAdjust="spacingAndGlyphs" font-family='"Liberation Sans", "DejaVu Sans", sans-serif' >12%</text>
<rect x="2938.35" y="2089.8" width="30" height="6" fill="#9a9a9a" />
<rect x="3003.8500000000004" y="2089.8" width="30" height="6" fill="#9a9a9a" />
<rect x="3015.8500000000004" y="2077.8" width="6" height="30" fill="#9a9a9a" />
<text x="3087" y="2106" font-size="36" fill="#989a9b" textLength="26" lengthAdjust="spacingAndGlyphs" font-family='"Liberation Sans", "DejaVu Sans", sans-serif' >R:</text>
<rect x="3146.5" y="2043.9" width="279.5" height="99.2" fill="#fbfaf9" rx="13" stroke="#d5d0cc" stroke-width="3" />
<rect x="3292.8" y="2044.9" width="2" height="97.2" fill="#e6e3e0" />
<rect x="3355.9" y="2044.9" width="2" height="97.2" fill="#e6e3e0" />
<text x="3188" y="2105.5" font-size="36" fill="#2e3436" textLength="75" lengthAdjust="spacingAndGlyphs" font-family='"Liberation Sans", "DejaVu Sans", sans-serif' >0.00°</text>
<rect x="3310.3500000000004" y="2089.8" width="30" height="6" fill="#9a9a9a" />
<rect x="3376.45" y="2089.8" width="30" height="6" fill="#9a9a9a" />
<rect x="3388.45" y="2077.8" width="6" height="30" fill="#9a9a9a" />
<rect x="0" y="2142.3" width="3456" height="13.7" fill="#000" />
<rect x="0" y="2156" width="3456" height="4" fill="#9c9c9c" />
<rect x="336" y="2156" width="108" height="4" fill="#d2d2d2" />
<rect x="1313.5" y="561.5" width="648" height="1080" fill="none" stroke="#606060" stroke-width="3" />
<g fill="#000"><path d="M1382.9 665.4C1384.0 666.2 1384.8 666.3 1386.6 669.7C1388.4 673.2 1388.7 671.8 1389.7 678.4C1390.7 685.1 1389.4 688.3 1390.4 694.6C1391.3 700.9 1390.6 698.7 1393.5 702.1C1396.3 705.4 1398.6 708.4 1400.9 707.0C1403.2 705.7 1401.2 701.4 1402.2 697.1C1403.2 692.8 1403.2 693.3 1404.7 690.9C1406.1 688.5 1407.4 685.8 1407.8 688.1C1408.1 690.5 1406.6 694.9 1405.9 699.6C1405.2 704.3 1404.3 701.8 1405.3 705.8C1406.3 709.8 1407.5 710.2 1409.6 714.5C1411.8 718.8 1412.0 718.6 1413.4 722.0C1414.7 725.3 1412.9 724.3 1414.6 726.9C1416.3 729.6 1416.6 729.1 1419.6 731.9C1422.6 734.7 1421.5 736.9 1425.8 737.5C1430.1 738.1 1433.9 733.0 1435.7 734.1C1437.6 735.3 1433.5 737.5 1432.6 741.8C1431.8 746.2 1432.1 745.9 1432.6 750.5C1433.1 755.2 1433.0 754.9 1434.5 759.3C1436.0 763.6 1436.1 763.6 1438.2 766.7C1440.4 769.9 1440.9 767.4 1442.6 771.1C1444.2 774.7 1443.6 774.3 1444.4 780.4C1445.3 786.5 1445.1 786.7 1445.7 794.1C1446.3 801.4 1446.1 800.8 1446.7 808.0C1447.3 815.2 1447.9 816.3 1447.9 821.1C1448.0 825.9 1448.5 825.7 1446.9 826.1C1445.3 826.4 1444.4 825.3 1442.0 822.3C1439.5 819.3 1439.3 819.5 1437.6 814.9C1435.9 810.2 1437.2 809.6 1435.7 804.9C1434.2 800.3 1433.0 799.0 1432.0 797.5C1431.0 795.9 1435.0 802.6 1432.0 799.0C1429.0 795.5 1426.8 792.7 1420.8 784.1C1414.8 775.5 1408.0 767.0 1409.6 766.7C1411.3 766.4 1420.4 776.9 1427.0 782.9C1433.7 788.8 1431.5 788.8 1434.5 789.1C1437.5 789.4 1437.7 787.1 1438.2 784.1C1438.7 781.1 1439.3 783.5 1436.4 777.9C1433.4 772.3 1431.5 770.6 1427.0 763.0C1422.6 755.4 1422.9 754.9 1419.6 749.3C1416.3 743.7 1418.2 746.5 1414.6 741.8C1411.0 737.2 1409.2 736.9 1405.9 731.9C1402.6 726.9 1403.8 726.8 1402.2 723.2C1400.5 719.5 1403.0 722.2 1399.7 718.2C1396.4 714.2 1393.7 713.2 1389.7 708.3C1385.8 703.3 1386.3 703.6 1384.8 699.6C1383.3 695.6 1383.6 696.7 1384.1 693.4C1384.6 690.0 1385.9 690.1 1386.6 687.1C1387.4 684.2 1387.3 685.8 1387.0 682.2C1386.7 678.5 1386.6 677.6 1385.4 673.5C1384.2 669.3 1383.2 668.8 1382.5 666.6C1381.9 664.5 1381.8 664.6 1382.9 665.4Z"/><path d="M1476.1 720.1C1477.0 721.1 1477.7 722.5 1477.4 725.7C1477.1 728.8 1475.9 726.9 1474.9 731.9C1473.9 736.9 1474.0 737.7 1473.7 744.3C1473.3 751.0 1473.2 752.1 1473.7 756.8C1474.2 761.4 1475.2 758.4 1475.5 761.7C1475.9 765.1 1475.9 765.2 1474.9 769.2C1473.9 773.2 1473.9 772.7 1471.8 776.7C1469.6 780.6 1469.0 780.8 1466.8 784.1C1464.7 787.4 1464.9 785.8 1463.7 789.1C1462.5 792.4 1462.8 791.5 1462.5 796.6C1462.1 801.6 1462.3 804.8 1462.5 808.0C1462.6 811.2 1463.1 803.5 1463.1 808.6C1463.1 813.8 1463.5 819.0 1462.5 827.3C1461.5 835.6 1462.2 834.4 1459.4 839.7C1456.5 845.0 1457.2 844.2 1451.9 847.2C1446.6 850.2 1447.8 848.3 1439.5 850.9C1431.2 853.6 1428.8 853.5 1420.8 857.1C1412.9 860.8 1413.9 860.0 1409.6 864.6C1405.3 869.2 1406.3 869.9 1404.7 874.5C1403.0 879.2 1405.7 879.8 1403.4 882.0C1401.1 884.3 1399.6 883.7 1395.9 883.0C1392.3 882.3 1391.6 882.4 1389.7 879.5C1387.9 876.6 1388.1 877.0 1389.1 872.1C1390.1 867.1 1390.3 866.5 1393.5 860.9C1396.6 855.2 1395.3 855.2 1400.9 850.9C1406.6 846.6 1408.3 847.5 1414.6 844.7C1420.9 841.9 1421.2 844.5 1424.5 840.4C1427.9 836.2 1438.0 833.1 1427.0 829.2C1416.1 825.2 1395.5 827.4 1383.5 825.4C1371.6 823.4 1384.8 825.0 1382.3 821.7C1379.8 818.4 1368.9 812.8 1374.2 813.0C1379.5 813.2 1386.4 819.0 1402.2 822.3C1417.9 825.6 1422.6 823.4 1433.2 825.4C1443.9 827.4 1437.6 827.6 1442.0 829.8C1446.3 831.9 1446.1 834.2 1449.4 833.5C1452.7 832.9 1452.6 832.3 1454.4 827.3C1456.2 822.3 1456.3 821.5 1456.3 814.9C1456.3 808.2 1455.0 809.1 1454.4 802.4C1453.7 795.8 1453.9 792.2 1453.8 790.0C1453.6 787.8 1453.3 794.6 1453.8 794.1C1454.3 793.5 1452.8 791.8 1455.6 787.8C1458.4 783.9 1460.9 784.1 1464.3 779.1C1467.8 774.2 1467.5 775.2 1468.7 769.2C1469.8 763.2 1469.2 763.4 1468.7 756.8C1468.2 750.1 1467.5 750.3 1466.8 744.3C1466.2 738.4 1465.5 738.7 1466.2 734.4C1466.9 730.1 1467.1 731.5 1469.3 728.2C1471.5 724.9 1472.5 724.1 1474.3 722.0C1476.1 719.8 1475.3 719.1 1476.1 720.1Z"/><path d="M1368.0 886.4C1370.3 885.7 1370.5 884.8 1377.3 885.1C1384.1 885.4 1385.5 885.8 1393.5 887.6C1401.4 889.4 1400.8 888.5 1407.1 892.0C1413.4 895.4 1411.1 894.0 1417.1 900.7C1423.1 907.3 1423.6 909.2 1429.5 916.8C1435.5 924.4 1434.5 923.0 1439.5 929.3C1444.4 935.6 1442.9 935.1 1448.2 940.4C1453.5 945.7 1455.0 944.8 1459.4 949.1C1463.7 953.5 1462.3 952.3 1464.3 956.6C1466.3 960.9 1464.2 961.7 1466.8 965.3C1469.5 969.0 1472.0 966.9 1474.3 970.3C1476.6 973.7 1475.2 975.8 1475.5 978.0C1475.9 980.2 1476.4 975.8 1475.5 978.6C1474.7 981.5 1472.7 983.6 1472.4 988.6C1472.1 993.6 1471.5 991.7 1474.3 997.3C1477.1 1002.9 1479.0 1003.1 1483.0 1009.7C1487.0 1016.4 1485.9 1015.2 1489.2 1022.2C1492.5 1029.1 1493.4 1029.2 1495.4 1035.8C1497.4 1042.5 1496.2 1041.1 1496.7 1047.0C1497.2 1053.0 1495.8 1052.1 1497.3 1058.2C1498.8 1064.4 1505.7 1065.1 1502.3 1070.0C1498.8 1075.0 1490.4 1076.4 1484.2 1076.9C1478.1 1077.4 1481.1 1077.2 1479.3 1071.9C1477.4 1066.6 1478.0 1065.3 1477.4 1057.0C1476.7 1048.7 1477.9 1049.4 1476.8 1040.8C1475.6 1032.2 1476.4 1032.9 1473.0 1024.7C1469.7 1016.4 1469.3 1017.7 1464.3 1009.7C1459.4 1001.8 1457.7 1003.1 1454.4 994.8C1451.1 986.5 1453.6 985.6 1451.9 978.6C1450.2 971.7 1449.8 972.6 1448.2 968.7C1446.5 964.8 1448.3 968.3 1445.7 964.1C1443.0 959.8 1442.5 958.5 1438.2 952.9C1433.9 947.2 1433.8 948.2 1429.5 942.9C1425.2 937.6 1426.4 938.9 1422.1 933.0C1417.7 927.0 1418.7 927.2 1413.4 920.5C1408.1 913.9 1407.8 914.1 1402.2 908.1C1396.5 902.1 1397.9 902.1 1392.2 898.2C1386.6 894.2 1387.3 896.0 1381.0 893.2C1374.7 890.4 1372.1 889.4 1368.6 887.6C1365.1 885.8 1365.7 887.0 1368.0 886.4Z"/><path d="M1376.7 958.5C1380.0 958.5 1383.9 958.2 1389.7 959.7C1395.5 961.2 1393.8 960.9 1398.4 964.1C1403.1 967.2 1405.5 970.3 1407.1 971.5C1408.8 972.8 1403.8 967.1 1404.7 968.7C1405.5 970.3 1407.6 974.5 1410.2 977.4C1412.9 980.3 1411.3 979.0 1414.6 979.6C1417.9 980.3 1422.3 978.7 1422.7 979.9C1423.0 981.1 1418.8 981.8 1415.8 984.2C1412.9 986.7 1410.5 986.6 1411.5 989.2C1412.5 991.9 1414.1 991.5 1419.6 994.2C1425.0 996.8 1425.7 995.8 1432.0 999.2C1438.3 1002.5 1438.4 1002.8 1443.2 1006.6C1448.0 1010.4 1448.9 1010.0 1450.0 1013.5C1451.2 1016.9 1450.7 1015.7 1447.5 1019.7C1444.4 1023.7 1443.4 1023.1 1438.2 1028.4C1433.1 1033.7 1432.6 1033.6 1428.3 1039.6C1424.0 1045.5 1424.6 1044.5 1422.1 1050.8C1419.5 1057.1 1419.7 1055.9 1418.6 1063.2C1417.4 1070.5 1418.8 1072.5 1417.7 1078.1C1416.6 1083.8 1417.7 1082.0 1414.6 1084.3C1411.4 1086.7 1410.5 1086.5 1405.9 1086.8C1401.3 1087.1 1400.4 1087.6 1397.2 1085.6C1393.9 1083.6 1395.0 1086.3 1393.7 1079.4C1392.4 1072.4 1392.9 1072.1 1392.2 1059.5C1391.6 1046.9 1394.9 1041.2 1391.2 1032.1C1387.6 1023.0 1382.9 1028.3 1378.5 1025.3C1374.2 1022.3 1375.1 1022.6 1374.8 1020.9C1374.5 1019.3 1371.7 1019.2 1377.3 1019.1C1382.9 1018.9 1384.7 1019.4 1395.9 1020.3C1407.2 1021.2 1411.3 1023.0 1419.6 1022.5C1427.9 1022.0 1423.1 1021.0 1427.0 1018.4C1431.0 1015.8 1433.8 1015.7 1434.5 1012.8C1435.2 1010.0 1434.8 1010.9 1429.5 1007.9C1424.2 1004.9 1422.6 1005.0 1414.6 1001.7C1406.6 998.3 1408.0 999.2 1399.7 995.4C1391.4 991.6 1390.6 990.7 1383.5 987.4C1376.4 984.0 1375.6 984.7 1372.9 983.0C1370.3 981.3 1372.1 981.6 1373.6 981.1C1375.1 980.6 1374.2 980.0 1378.5 981.1C1382.9 982.3 1383.3 983.0 1389.7 985.5C1396.2 988.0 1399.3 991.3 1402.8 990.5C1406.3 989.6 1403.9 987.2 1402.8 982.4C1401.6 977.6 1399.9 975.7 1398.4 972.4C1396.9 969.2 1399.5 972.5 1397.2 970.3C1394.9 968.0 1395.0 966.9 1389.7 964.1C1384.4 961.2 1380.8 961.2 1377.3 959.7C1373.8 958.2 1373.4 958.5 1376.7 958.5Z"/><path d="M1372.9 1132.2C1372.9 1127.0 1379.1 1128.5 1379.8 1122.9C1380.4 1117.2 1376.1 1114.7 1375.4 1111.1C1374.8 1107.4 1375.1 1107.9 1377.3 1109.2C1379.5 1110.5 1380.9 1114.7 1383.5 1116.0C1386.2 1117.4 1385.8 1117.7 1387.2 1114.2C1388.7 1110.7 1388.1 1107.5 1389.1 1103.0C1390.1 1098.5 1389.5 1099.0 1391.0 1097.4C1392.5 1095.7 1392.7 1096.6 1394.7 1096.8C1396.7 1096.9 1394.5 1098.0 1398.4 1098.0C1402.4 1098.0 1404.0 1098.1 1409.6 1096.8C1415.3 1095.4 1414.3 1095.7 1419.6 1093.0C1424.9 1090.4 1422.7 1090.9 1429.5 1086.8C1436.3 1082.8 1442.7 1078.2 1445.1 1077.9C1447.4 1077.5 1440.7 1081.9 1438.2 1085.6C1435.7 1089.3 1436.2 1088.5 1435.7 1091.8C1435.2 1095.1 1435.0 1095.7 1436.4 1098.0C1437.7 1100.3 1437.2 1100.8 1440.7 1100.5C1444.2 1100.2 1444.4 1099.4 1449.4 1096.8C1454.4 1094.1 1453.4 1093.9 1459.4 1090.5C1465.3 1087.2 1465.5 1086.5 1471.8 1084.3C1478.1 1082.2 1476.5 1083.3 1483.0 1082.5C1489.4 1081.6 1492.7 1078.7 1496.0 1081.2C1499.4 1083.7 1496.9 1087.3 1495.4 1091.8C1493.9 1096.3 1495.4 1093.9 1490.4 1098.0C1485.5 1102.2 1485.4 1101.7 1476.8 1107.3C1468.1 1113.0 1468.1 1113.0 1458.1 1119.1C1448.2 1125.3 1447.1 1124.7 1439.5 1130.3C1431.8 1136.0 1434.5 1134.4 1429.5 1140.3C1424.5 1146.2 1424.1 1144.5 1420.8 1152.4C1417.5 1160.2 1418.5 1159.2 1417.1 1169.8C1415.7 1180.4 1416.1 1179.7 1415.6 1192.2C1415.1 1204.6 1418.1 1207.8 1415.2 1216.4C1412.3 1225.0 1410.8 1219.7 1404.7 1224.5C1398.5 1229.3 1398.2 1230.1 1392.2 1234.4C1386.3 1238.7 1386.3 1238.8 1382.3 1240.7C1378.3 1242.5 1378.5 1249.2 1377.3 1241.3C1376.1 1233.3 1378.3 1222.4 1377.9 1210.8C1377.6 1199.2 1375.4 1202.7 1376.1 1197.8C1376.7 1192.8 1379.1 1201.9 1380.4 1192.2C1381.7 1182.4 1381.2 1174.3 1381.0 1161.1C1380.9 1147.8 1381.9 1150.1 1379.8 1142.4C1377.6 1134.7 1372.9 1137.4 1372.9 1132.2Z"/><path d="M1376.1 1256.2C1380.4 1255.2 1385.3 1255.3 1392.2 1252.5C1399.2 1249.6 1396.2 1250.4 1402.2 1245.6C1408.1 1240.8 1407.3 1240.1 1414.6 1234.4C1421.9 1228.8 1421.2 1228.8 1429.5 1224.5C1437.8 1220.2 1439.5 1219.8 1445.7 1218.3C1451.8 1216.8 1452.5 1216.2 1452.5 1218.9C1452.5 1221.5 1450.8 1223.1 1445.7 1228.2C1440.5 1233.4 1439.9 1232.2 1433.2 1238.2C1426.6 1244.1 1426.1 1244.8 1420.8 1250.6C1415.5 1256.4 1415.0 1252.3 1413.4 1259.9C1411.7 1267.6 1413.6 1269.1 1414.6 1279.2C1415.6 1289.3 1415.4 1287.5 1417.1 1297.8C1418.7 1308.2 1418.7 1302.0 1420.8 1318.0C1422.9 1334.0 1422.8 1331.2 1424.9 1357.7C1427.0 1384.2 1425.6 1385.4 1428.8 1417.2C1432.0 1449.0 1432.0 1445.0 1436.8 1476.8C1441.6 1508.6 1440.8 1512.0 1446.7 1536.3C1452.6 1560.6 1455.7 1559.5 1459.0 1568.0L1461 1574 Q1461 1576.5 1456 1576.5 L1400 1576.5 Q1376 1574.5 1374.2 1570 L1375.5 1262 Z"/><path d="M1499.1 1080.0C1504.6 1075.3 1525.0 1066.6 1532.1 1064.4C1539.1 1062.3 1538.2 1066.3 1541.4 1066.9C1544.6 1067.5 1547.6 1068.5 1551.4 1068.2C1555.1 1067.9 1559.7 1066.1 1563.8 1065.1C1567.9 1064.0 1573.0 1062.6 1576.2 1062.0C1579.4 1061.3 1581.8 1061.1 1583.1 1061.3C1584.3 1061.5 1585.9 1062.4 1583.7 1063.2C1581.5 1064.0 1574.4 1065.1 1570.0 1066.3C1565.7 1067.5 1561.1 1069.8 1557.6 1070.7C1554.1 1071.5 1552.0 1071.3 1548.9 1071.3C1545.8 1071.3 1542.7 1069.7 1538.9 1070.7C1535.2 1071.6 1530.6 1074.6 1526.5 1076.9C1522.4 1079.2 1518.6 1081.7 1514.1 1084.3C1509.5 1086.9 1501.6 1093.1 1499.1 1092.4C1496.7 1091.7 1493.7 1084.6 1499.1 1080.0Z"/><path d="M1497.3 1055.1C1499.8 1054.5 1503.1 1057.2 1506.6 1055.7C1510.1 1054.2 1508.3 1052.8 1510.3 1049.5C1512.3 1046.2 1510.4 1046.0 1514.1 1043.3C1517.7 1040.6 1519.5 1042.0 1524.0 1039.6C1528.5 1037.2 1530.5 1034.0 1530.8 1034.4C1531.2 1034.7 1529.7 1037.4 1525.3 1040.8C1520.8 1044.2 1517.5 1043.7 1514.1 1047.0C1510.6 1050.3 1513.5 1050.6 1512.2 1053.2C1510.9 1055.9 1507.9 1055.5 1509.1 1057.0C1510.3 1058.5 1511.4 1059.0 1516.6 1058.8C1521.7 1058.7 1527.7 1056.0 1528.4 1056.4C1529.0 1056.7 1523.8 1059.3 1519.0 1060.1C1514.2 1060.9 1516.1 1060.0 1510.3 1059.5C1504.5 1059.0 1500.8 1059.4 1497.3 1058.2C1493.8 1057.1 1494.8 1055.8 1497.3 1055.1Z"/><path d="M1541.9 841.7C1537.5 842.8 1533.7 843.2 1525.8 846.5C1518.0 849.7 1517.1 849.8 1512.4 854.1C1507.6 858.3 1507.9 856.5 1508.0 862.3C1508.0 868.1 1509.1 868.1 1512.6 875.8C1516.1 883.5 1516.7 883.4 1521.2 891.2C1525.8 898.9 1526.1 898.2 1529.7 904.9C1533.3 911.5 1531.5 914.1 1534.7 916.1C1538.0 918.2 1541.6 916.5 1541.9 912.5C1542.2 908.6 1539.8 908.0 1535.7 901.4C1531.7 894.8 1531.5 895.3 1526.8 887.8C1522.1 880.3 1521.4 880.2 1518.0 873.3C1514.6 866.4 1514.6 866.1 1513.9 861.9C1513.3 857.8 1512.2 861.1 1515.8 857.7C1519.3 854.3 1520.1 853.2 1527.2 849.2C1534.2 845.1 1538.3 844.7 1542.2 842.7C1546.1 840.7 1546.2 840.7 1541.9 841.7Z"/><path d="M1470.2 885.2C1473.2 887.5 1474.7 888.2 1482.1 892.5C1489.4 896.8 1489.8 896.3 1497.8 901.2C1505.8 906.1 1505.2 905.7 1512.2 910.8C1519.3 915.9 1518.5 915.7 1524.2 920.4C1530.0 925.2 1529.8 928.3 1533.7 928.5C1537.7 928.7 1540.5 925.0 1539.1 921.3C1537.8 917.6 1534.9 918.7 1528.7 914.4C1522.5 910.2 1523.4 910.2 1515.9 905.4C1508.4 900.6 1509.0 900.8 1500.5 896.4C1491.9 892.0 1491.8 892.3 1483.9 888.9C1476.0 885.6 1474.5 884.8 1470.9 883.8C1467.2 882.8 1467.2 882.8 1470.2 885.2Z"/><path d="M1534.0 914.3C1537.3 911.0 1537.4 910.2 1541.4 909.4C1545.4 908.5 1548.9 909.6 1548.9 911.2C1548.9 912.9 1543.7 913.4 1541.4 915.6C1539.1 917.7 1537.5 916.0 1540.2 919.3C1542.8 922.6 1546.9 923.7 1551.4 928.0C1555.8 932.3 1555.6 930.8 1557.0 935.5C1558.3 940.1 1558.2 939.8 1556.3 945.4C1554.5 951.1 1554.1 950.3 1550.1 956.6C1546.1 962.9 1544.4 964.8 1541.4 969.0C1538.4 973.3 1541.6 967.2 1538.9 972.4C1536.3 977.6 1535.4 981.3 1531.5 988.6C1527.5 995.9 1528.0 995.1 1524.0 999.8C1520.0 1004.4 1521.2 1001.7 1516.6 1006.0C1511.9 1010.3 1507.3 1014.0 1506.6 1015.9C1505.9 1017.9 1509.4 1015.3 1514.1 1013.5C1518.7 1011.6 1518.2 1011.6 1524.0 1009.1C1529.8 1006.6 1535.2 1003.6 1535.8 1004.1C1536.5 1004.6 1531.6 1008.2 1526.5 1011.0C1521.4 1013.8 1522.2 1011.7 1516.6 1014.7C1510.9 1017.7 1509.7 1019.0 1505.4 1022.2C1501.1 1025.3 1502.5 1025.9 1500.4 1026.5C1498.2 1027.2 1498.1 1027.1 1497.3 1024.7C1496.5 1022.2 1496.1 1021.2 1497.3 1017.2C1498.4 1013.2 1497.8 1014.4 1501.6 1009.7C1505.4 1005.1 1507.9 1005.8 1511.6 999.8C1515.2 993.8 1512.0 994.6 1515.3 987.4C1518.6 980.1 1521.7 975.3 1524.0 972.4C1526.3 969.5 1521.4 979.4 1524.0 976.5C1526.7 973.6 1529.0 969.2 1534.0 961.6C1538.9 954.0 1539.8 953.9 1542.7 947.9C1545.5 941.9 1544.9 943.2 1544.5 939.2C1544.2 935.2 1544.2 935.3 1541.4 933.0C1538.6 930.7 1537.3 933.5 1534.0 930.5C1530.6 927.5 1529.0 926.1 1529.0 921.8C1529.0 917.5 1530.6 917.6 1534.0 914.3Z"/><path d="M1549.5 789.8C1544.8 792.4 1542.2 794.0 1533.0 801.3C1523.8 808.6 1522.0 809.6 1515.0 817.3C1508.0 825.0 1509.5 823.6 1506.7 830.2C1504.0 836.8 1505.1 836.5 1504.9 842.0C1504.6 847.6 1504.5 848.6 1505.8 850.9C1507.2 853.3 1508.5 853.2 1509.8 850.9C1511.2 848.7 1510.4 847.5 1510.8 842.4C1511.3 837.3 1509.5 837.9 1511.4 831.9C1513.4 825.9 1511.8 827.5 1518.1 819.9C1524.3 812.4 1526.2 811.2 1534.9 803.6C1543.6 796.0 1546.8 795.1 1550.7 791.4C1554.6 787.8 1554.3 787.2 1549.5 789.8Z"/><path d="M1503.4 836.1C1503.6 839.9 1503.7 846.7 1505.3 850.2C1506.8 853.6 1509.4 853.0 1509.2 849.2C1508.9 845.4 1505.9 839.4 1504.4 835.9C1502.8 832.4 1503.1 832.3 1503.4 836.1Z"/><path d="M1527.1 808.6C1530.7 806.7 1532.9 804.6 1539.6 800.1C1546.4 795.5 1549.3 794.5 1552.2 791.6C1555.1 788.6 1554.2 787.4 1550.5 789.1C1546.8 790.8 1544.8 793.3 1538.2 798.0C1531.7 802.8 1528.9 804.1 1525.9 806.9C1523.0 809.7 1523.4 810.4 1527.1 808.6Z"/><path d="M1792.4 773.0C1790.7 775.8 1789.3 778.5 1787.9 784.2C1786.5 789.9 1787.6 789.5 1787.0 794.3C1786.3 799.1 1788.1 796.3 1785.4 802.2C1782.7 808.1 1782.1 810.1 1776.9 816.4C1771.7 822.7 1774.1 819.4 1766.1 825.9C1758.1 832.5 1754.9 832.6 1747.0 841.0C1739.1 849.3 1741.7 850.5 1736.6 857.3C1731.5 864.0 1734.2 861.5 1727.9 866.1C1721.6 870.7 1719.5 870.5 1713.1 874.4C1706.6 878.3 1703.2 876.1 1703.8 880.8C1704.3 885.6 1710.6 891.4 1715.1 892.2C1719.6 892.9 1715.8 889.0 1720.7 883.7C1725.5 878.3 1727.5 878.1 1733.2 872.1C1738.9 866.0 1737.0 868.3 1741.9 861.0C1746.7 853.8 1744.0 853.2 1751.4 845.0C1758.8 836.8 1761.7 836.9 1769.6 830.2C1777.5 823.5 1775.7 826.8 1781.2 819.8C1786.6 812.9 1787.4 810.9 1790.0 804.2C1792.7 797.5 1790.6 799.8 1791.0 794.7C1791.3 789.6 1790.4 790.5 1791.3 784.9C1792.2 779.3 1794.0 776.8 1794.3 773.7C1794.6 770.5 1794.1 770.2 1792.4 773.0Z"/><path d="M1709.4 880.0C1703.1 882.7 1707.1 884.0 1699.5 889.9C1691.8 895.9 1690.8 897.1 1680.8 902.4C1670.9 907.7 1670.5 906.7 1662.2 909.8C1653.9 913.0 1654.0 912.4 1649.7 914.2C1645.4 916.0 1646.7 915.8 1646.0 916.7C1645.3 917.5 1642.9 918.3 1647.2 917.3C1651.6 916.3 1654.2 915.8 1662.2 912.9C1670.1 910.1 1668.8 910.9 1677.1 906.7C1685.4 902.6 1685.0 901.6 1693.2 897.4C1701.5 893.3 1701.2 893.5 1708.2 891.2C1715.1 888.9 1714.1 888.9 1719.4 888.7C1724.7 888.5 1727.2 891.6 1728.1 890.6C1728.9 889.6 1723.8 887.8 1722.5 885.0C1721.1 882.2 1726.6 881.3 1723.1 880.0C1719.6 878.7 1715.7 877.3 1709.4 880.0Z"/><path d="M1790.5 797.6C1794.7 797.2 1798.1 795.4 1805.4 793.8C1812.7 792.3 1812.9 790.8 1817.9 791.6C1822.9 792.4 1822.2 795.5 1824.1 796.7C1825.9 797.9 1826.3 798.1 1824.8 796.0C1823.3 793.9 1823.8 789.9 1818.5 788.7C1813.2 787.4 1812.5 789.7 1804.9 791.4C1797.3 793.1 1793.7 793.5 1789.9 795.1C1786.1 796.8 1786.4 797.9 1790.5 797.6Z"/><path d="M1729.5 884.1C1736.7 883.3 1744.9 883.9 1756.2 879.6C1767.4 875.4 1765.0 874.9 1771.7 868.0C1778.5 861.1 1777.0 860.9 1781.5 853.8C1786.0 846.7 1787.1 844.9 1788.8 841.4C1790.5 837.9 1790.5 838.0 1787.9 840.8C1785.4 843.7 1784.1 845.6 1779.1 852.1C1774.0 858.6 1775.4 858.8 1768.9 865.2C1762.4 871.6 1765.3 871.3 1754.7 875.9C1744.1 880.6 1735.9 880.5 1729.1 882.7C1722.4 884.8 1722.3 884.9 1729.5 884.1Z"/><path d="M1705.9 836.3C1701.7 837.9 1701.0 840.0 1692.5 845.4C1683.9 850.9 1682.2 850.6 1673.7 856.7C1665.3 862.8 1662.6 863.7 1660.8 868.4C1659.1 873.1 1662.0 873.8 1667.1 874.3C1672.1 874.9 1676.5 871.9 1679.8 870.4C1683.0 869.0 1682.7 868.8 1679.4 869.0C1676.0 869.2 1671.4 871.1 1667.2 871.3C1663.0 871.5 1661.3 873.0 1663.5 869.8C1665.7 866.5 1667.3 864.9 1675.5 859.1C1683.6 853.3 1685.4 853.2 1694.0 848.0C1702.7 842.8 1704.8 842.8 1708.0 839.7C1711.2 836.6 1710.0 834.8 1705.9 836.3Z"/><path d="M1631.5 881.5C1634.7 880.3 1636.4 877.5 1642.7 875.5C1649.1 873.4 1652.1 874.8 1655.4 873.8C1658.8 872.8 1658.9 872.1 1655.2 871.8C1651.6 871.5 1648.3 870.4 1641.8 872.6C1635.3 874.9 1633.4 877.9 1630.7 880.3C1627.9 882.6 1628.3 882.8 1631.5 881.5Z"/><path d="M1626.0 821.1C1624.2 824.9 1620.7 829.9 1620.6 835.8C1620.5 841.7 1625.1 838.3 1625.6 843.2C1626.1 848.1 1625.4 847.9 1622.4 854.2C1619.4 860.5 1617.6 860.4 1614.4 866.9C1611.2 873.4 1610.7 875.1 1610.4 878.5C1610.1 881.9 1611.2 882.2 1613.2 879.6C1615.2 877.0 1614.1 874.9 1617.9 868.8C1621.7 862.7 1623.7 863.6 1627.3 856.6C1631.0 849.7 1631.8 848.5 1631.6 842.8C1631.4 837.1 1627.7 841.0 1626.6 835.3C1625.5 829.6 1627.6 825.2 1627.5 821.4C1627.3 817.6 1627.8 817.2 1626.0 821.1Z"/><path d="M1617.3 882.0C1619.7 880.9 1624.8 879.0 1627.8 882.0C1630.8 885.0 1628.2 890.4 1628.4 893.2C1628.7 896.0 1627.6 889.3 1628.6 892.4C1629.6 895.5 1629.3 899.4 1632.3 904.9C1635.3 910.3 1638.5 909.0 1639.8 912.9C1641.1 916.9 1640.6 915.3 1637.3 919.8C1634.0 924.3 1631.8 925.9 1627.4 929.7C1622.9 933.5 1622.8 933.8 1620.5 934.1C1618.2 934.4 1617.8 933.5 1618.6 931.0C1619.5 928.5 1620.5 928.7 1623.6 924.8C1626.8 920.8 1629.6 920.0 1630.5 916.1C1631.3 912.1 1628.6 914.5 1626.7 909.8C1624.9 905.2 1625.8 904.9 1623.6 898.6C1621.5 892.4 1620.3 890.7 1618.6 886.2C1617.0 881.8 1614.8 883.1 1617.3 882.0Z"/><path d="M1548.9 974.0C1553.2 971.7 1554.8 967.2 1563.8 961.6C1572.7 955.9 1572.5 957.8 1582.4 952.9C1592.4 947.9 1593.0 947.9 1601.1 942.9C1609.2 938.0 1609.8 936.9 1612.9 934.2C1616.1 931.6 1616.1 931.8 1612.9 933.0C1609.8 934.1 1607.2 936.4 1601.1 938.6C1595.0 940.7 1594.2 941.6 1589.9 941.1C1585.6 940.6 1586.4 939.9 1584.9 936.7C1583.4 933.6 1584.0 932.4 1584.3 929.3C1584.6 926.1 1587.0 925.6 1586.2 924.9C1585.3 924.2 1583.0 923.0 1581.2 926.8C1579.4 930.6 1580.0 934.2 1579.3 939.2C1578.7 944.2 1582.9 941.8 1578.7 945.4C1574.6 949.1 1570.4 948.2 1563.8 952.9C1557.2 957.5 1558.2 958.2 1553.9 962.8C1549.5 967.5 1549.0 967.3 1547.6 970.3C1546.3 973.3 1544.6 976.3 1548.9 974.0Z"/><path d="M1561.5 973.5C1565.7 973.1 1569.3 973.2 1576.8 970.4C1584.3 967.6 1582.9 967.0 1589.6 963.1C1596.2 959.2 1595.7 958.7 1601.8 955.7C1608.0 952.7 1607.9 953.4 1612.7 951.8C1617.5 950.3 1618.0 950.8 1619.9 949.9C1621.7 949.0 1621.7 948.7 1619.6 948.4C1617.5 948.2 1617.0 947.8 1611.9 948.9C1606.8 950.0 1606.8 949.6 1600.3 952.5C1593.9 955.5 1594.3 956.0 1587.8 960.1C1581.2 964.1 1582.8 964.5 1575.7 967.6C1568.6 970.8 1564.9 970.5 1561.1 972.0C1557.3 973.6 1557.3 973.9 1561.5 973.5Z"/><path d="M1612.0 953.2C1615.5 954.9 1619.2 956.9 1625.8 957.6C1632.4 958.3 1633.7 956.6 1636.6 955.9C1639.4 955.1 1639.3 955.1 1636.5 954.9C1633.7 954.7 1632.5 956.1 1626.1 955.1C1619.7 954.2 1616.3 951.8 1612.6 951.3C1608.8 950.8 1608.5 951.5 1612.0 953.2Z"/><path d="M1758.5 884.4C1760.8 885.0 1766.6 886.5 1774.1 889.9C1781.5 893.4 1779.2 894.1 1786.5 897.4C1793.8 900.7 1795.1 900.1 1801.4 902.4C1807.7 904.7 1807.5 903.6 1810.1 906.1C1812.8 908.6 1813.0 910.0 1811.4 911.7C1809.7 913.4 1808.9 913.6 1803.9 912.6C1798.9 911.6 1798.0 910.5 1792.7 908.0C1787.4 905.4 1787.7 902.8 1784.0 903.0C1780.4 903.2 1782.0 905.9 1779.0 908.6C1776.1 911.2 1775.5 912.1 1772.8 912.9C1770.2 913.8 1769.9 913.9 1769.1 911.7C1768.3 909.5 1767.7 909.0 1769.7 904.9C1771.7 900.7 1775.4 899.5 1776.6 896.2C1777.7 892.8 1777.0 894.8 1774.1 892.4C1771.1 890.1 1769.5 889.6 1765.4 887.5C1761.2 885.3 1756.2 883.7 1758.5 884.4Z"/><path d="M1592.4 1029.6C1592.4 1026.5 1593.8 1023.7 1601.1 1019.7C1608.4 1015.7 1611.5 1017.4 1619.7 1014.7C1628.0 1012.1 1634.1 1009.8 1632.2 1009.7C1630.2 1009.6 1613.7 1013.7 1612.4 1014.3C1611.1 1014.8 1621.7 1014.4 1627.4 1011.8C1633.0 1009.1 1630.4 1008.0 1633.6 1004.3C1636.7 1000.7 1637.5 997.1 1639.2 998.1C1640.8 999.1 1635.3 1008.1 1639.8 1008.1C1644.3 1008.1 1646.7 1002.8 1655.9 998.1C1665.2 993.5 1669.6 992.4 1674.6 990.7C1679.6 988.9 1679.6 988.5 1674.6 991.5C1669.6 994.5 1665.9 996.1 1655.9 1001.8C1646.0 1007.6 1647.2 1008.7 1637.3 1013.0C1627.4 1017.3 1626.9 1015.4 1618.6 1018.0C1610.4 1020.7 1610.5 1020.5 1606.2 1023.0C1601.9 1025.5 1600.8 1024.3 1602.5 1027.3C1604.1 1030.3 1604.8 1030.7 1612.4 1034.2C1620.1 1037.7 1622.8 1038.4 1631.1 1040.4C1639.4 1042.4 1635.2 1042.0 1643.5 1041.6C1651.8 1041.3 1653.2 1039.5 1662.2 1039.1C1671.1 1038.8 1669.8 1039.1 1677.1 1040.4C1684.4 1041.7 1688.5 1041.8 1689.5 1044.1C1690.5 1046.4 1686.1 1047.4 1680.8 1049.1C1675.5 1050.7 1675.6 1051.0 1669.6 1050.3C1663.7 1049.7 1660.8 1045.6 1658.4 1046.6C1656.1 1047.6 1661.3 1050.4 1660.9 1054.1C1660.6 1057.7 1659.8 1059.3 1657.2 1060.3C1654.5 1061.3 1654.0 1060.4 1651.0 1057.8C1648.0 1055.1 1648.0 1054.0 1646.0 1050.3C1644.0 1046.7 1647.5 1046.1 1643.5 1044.1C1639.5 1042.1 1639.4 1044.8 1631.1 1042.9C1622.8 1041.0 1617.1 1039.1 1612.4 1036.9C1607.8 1034.7 1616.6 1036.0 1613.5 1034.6C1610.5 1033.2 1606.7 1032.8 1601.1 1031.5C1595.5 1030.2 1592.4 1032.8 1592.4 1029.6Z"/><path d="M1647.2 1011.8C1647.9 1010.6 1646.6 1009.3 1652.2 1009.3C1657.9 1009.3 1659.1 1010.6 1668.4 1011.8C1677.7 1013.0 1678.7 1012.7 1687.0 1013.7C1695.3 1014.7 1695.2 1013.4 1699.5 1015.5C1703.8 1017.7 1703.2 1018.4 1703.2 1021.7C1703.2 1025.1 1701.8 1025.8 1699.5 1028.0C1697.1 1030.1 1694.8 1031.1 1694.5 1029.8C1694.2 1028.5 1697.1 1026.0 1698.2 1023.0C1699.4 1020.0 1701.8 1020.3 1698.8 1018.6C1695.9 1017.0 1695.2 1017.6 1687.0 1016.8C1678.9 1015.9 1678.3 1016.4 1668.4 1015.5C1658.4 1014.7 1655.4 1014.7 1649.7 1013.7C1644.1 1012.7 1646.6 1013.0 1647.2 1011.8Z"/><path d="M1706.9 1020.5C1704.4 1018.8 1705.7 1014.3 1706.7 1010.5C1707.7 1006.8 1708.4 1005.1 1711.9 1001.8C1715.4 998.6 1719.9 997.0 1724.3 994.4C1728.8 991.8 1731.0 990.4 1734.3 988.8C1737.5 987.2 1737.8 986.6 1740.5 986.3C1743.2 986.1 1745.3 986.7 1748.0 987.5C1750.6 988.4 1753.3 989.0 1753.5 990.7C1753.8 992.3 1750.7 992.9 1749.2 995.6C1747.7 998.4 1747.6 1001.3 1746.1 1004.3C1744.6 1007.3 1743.4 1008.7 1741.7 1010.5C1740.1 1012.4 1739.7 1012.4 1738.0 1013.7C1736.3 1014.9 1732.4 1014.5 1733.0 1016.8C1733.7 1019.0 1741.6 1024.0 1741.1 1024.8C1740.6 1025.7 1734.9 1022.2 1730.5 1021.1C1726.2 1020.0 1724.1 1019.4 1719.4 1019.3C1714.6 1019.1 1709.5 1022.2 1706.9 1020.5Z"/><path d="M1735.5 1016.4C1740.7 1017.4 1745.1 1016.1 1755.3 1017.0C1765.5 1018.0 1766.2 1018.0 1773.7 1020.0C1781.1 1021.9 1780.3 1024.1 1783.2 1024.2C1786.2 1024.4 1787.1 1022.6 1784.8 1020.5C1782.4 1018.5 1782.3 1018.3 1774.5 1016.6C1766.7 1014.8 1765.9 1014.9 1755.5 1014.0C1745.2 1013.2 1740.9 1012.8 1735.6 1013.4C1730.2 1014.0 1730.2 1015.4 1735.5 1016.4Z"/><path d="M1803.1 1023.2C1805.6 1023.2 1807.7 1022.0 1811.7 1020.4C1815.8 1018.9 1816.7 1018.3 1818.4 1017.2C1820.0 1016.1 1820.0 1016.1 1818.0 1016.3C1816.1 1016.5 1815.2 1017.0 1811.0 1018.1C1806.8 1019.1 1804.4 1018.9 1802.2 1020.3C1800.1 1021.7 1800.5 1023.1 1803.1 1023.2Z"/><path d="M1780.3 986.3C1781.7 985.4 1783.3 984.6 1786.5 984.4C1789.7 984.3 1791.1 984.5 1794.0 985.7C1796.9 986.8 1797.0 987.1 1798.9 989.4C1800.8 991.7 1800.3 993.0 1802.0 995.6C1803.8 998.2 1805.2 997.1 1806.4 1000.6C1807.6 1004.1 1807.6 1006.2 1807.0 1010.5C1806.4 1014.9 1805.8 1016.1 1803.9 1019.3C1802.0 1022.4 1801.3 1021.6 1798.9 1024.2C1796.6 1026.8 1796.9 1028.8 1794.0 1030.4C1791.1 1032.0 1788.4 1032.4 1786.5 1031.1C1784.6 1029.8 1786.7 1027.3 1785.9 1024.8C1785.0 1022.4 1784.1 1023.8 1782.8 1020.5C1781.5 1017.2 1780.9 1015.2 1780.3 1010.5C1779.6 1005.9 1779.6 1005.0 1780.0 1000.6C1780.5 996.3 1782.1 994.8 1782.1 991.9C1782.2 989.0 1780.7 989.5 1780.3 988.2C1779.8 986.9 1778.8 987.2 1780.3 986.3Z"/><path d="M1785.3 1036.8q0 -2 2 -2h6.5q2 0 2 2v2.2q0 2 -2 2h-6.5q-2 0 -2 -2z"/><path d="M1608.7 1057.2C1613.3 1055.2 1617.6 1053.8 1624.9 1052.8C1632.2 1051.8 1631.1 1051.3 1636.1 1053.4C1641.0 1055.6 1644.8 1059.4 1643.5 1060.9C1642.2 1062.4 1637.7 1059.4 1631.1 1059.0C1624.5 1058.7 1624.9 1059.3 1618.6 1059.7C1612.4 1060.0 1610.1 1060.9 1607.5 1060.3C1604.8 1059.6 1604.1 1059.2 1608.7 1057.2Z"/><path d="M1605.0 1050.4C1604.4 1052.8 1604.4 1056.9 1605.3 1059.1C1606.2 1061.4 1607.8 1061.3 1608.3 1058.9C1608.9 1056.6 1608.4 1052.5 1607.5 1050.2C1606.6 1048.0 1605.5 1048.1 1605.0 1050.4Z"/><path d="M1599.9 1063.6C1603.1 1064.6 1605.5 1062.8 1612.1 1064.2C1618.6 1065.6 1621.0 1068.2 1624.5 1068.9C1628.0 1069.7 1628.4 1069.1 1625.3 1067.1C1622.1 1065.0 1619.5 1063.0 1612.8 1061.3C1606.1 1059.6 1603.5 1060.0 1600.1 1060.6C1596.6 1061.3 1596.7 1062.7 1599.9 1063.6Z"/><path d="M1538.9 1055.7C1538.9 1052.6 1541.2 1050.8 1545.1 1045.8C1549.1 1040.8 1548.2 1041.7 1553.9 1037.1C1559.5 1032.4 1561.0 1033.0 1566.3 1028.4C1571.6 1023.7 1570.4 1025.3 1573.7 1019.7C1577.1 1014.0 1576.4 1014.4 1578.7 1007.2C1581.0 1000.1 1581.6 992.3 1582.4 992.9C1583.3 993.6 1582.8 1002.3 1581.8 1009.7C1580.8 1017.2 1579.9 1016.9 1578.7 1020.9C1577.6 1024.9 1574.8 1023.2 1577.5 1024.7C1580.1 1026.1 1589.0 1023.9 1588.7 1026.5C1588.3 1029.2 1582.9 1030.8 1576.2 1034.6C1569.6 1038.4 1569.4 1037.5 1563.8 1040.8C1558.2 1044.1 1558.4 1043.1 1555.1 1047.0C1551.8 1051.0 1554.0 1052.9 1551.4 1055.7C1548.7 1058.6 1548.5 1057.6 1545.1 1057.6C1541.8 1057.6 1538.9 1058.9 1538.9 1055.7Z"/><path d="M1471.8 1139.0C1476.6 1134.4 1487.0 1134.6 1495.4 1131.6C1503.9 1128.6 1508.6 1127.4 1514.1 1124.1C1519.5 1120.9 1518.7 1119.4 1522.8 1115.4C1526.9 1111.4 1533.6 1103.5 1534.6 1104.2C1535.6 1105.0 1526.9 1115.9 1527.7 1119.1C1528.6 1122.4 1533.0 1121.1 1538.9 1120.4C1544.9 1119.6 1551.4 1118.1 1557.6 1115.4C1563.8 1112.7 1566.3 1110.2 1570.0 1106.7C1573.7 1103.2 1574.1 1100.4 1576.2 1098.0C1578.3 1095.6 1579.8 1094.2 1580.6 1094.9C1581.3 1095.6 1577.1 1101.0 1580.0 1101.7C1582.8 1102.5 1589.4 1098.9 1594.9 1098.6C1600.4 1098.4 1604.0 1099.4 1607.3 1100.5C1610.7 1101.6 1614.2 1103.9 1611.7 1104.2C1609.2 1104.6 1600.7 1102.2 1594.9 1102.4C1589.0 1102.5 1587.4 1102.7 1582.4 1104.8C1577.5 1107.0 1575.0 1109.8 1570.0 1112.9C1565.0 1116.0 1566.3 1117.7 1557.6 1120.4C1548.9 1123.1 1537.7 1123.6 1526.5 1126.6C1515.3 1129.6 1509.6 1132.1 1501.6 1135.3C1493.7 1138.5 1490.4 1140.6 1486.7 1142.8C1483.0 1144.9 1484.2 1140.5 1483.0 1146.2C1481.7 1151.8 1481.7 1163.3 1480.5 1171.0C1479.3 1178.7 1478.8 1179.7 1476.8 1184.7C1474.8 1189.7 1473.5 1192.7 1470.5 1195.9C1467.6 1199.1 1465.0 1200.0 1461.8 1200.9C1458.7 1201.7 1455.5 1201.0 1455.0 1200.2C1454.5 1199.5 1457.0 1199.3 1459.4 1197.1C1461.7 1195.0 1464.6 1193.2 1466.8 1189.7C1469.1 1186.2 1469.7 1186.7 1470.5 1179.7C1471.4 1172.8 1470.9 1163.0 1471.2 1154.9C1471.4 1146.7 1466.9 1143.7 1471.8 1139.0Z"/><path d="M1550.4 974.3C1552.9 973.2 1552.0 970.7 1556.6 967.6C1561.2 964.5 1565.4 965.4 1567.6 962.7C1569.9 959.9 1568.7 957.1 1564.9 957.3C1561.2 957.6 1558.3 959.7 1553.6 963.6C1548.9 967.5 1548.2 968.9 1547.3 971.8C1546.5 974.6 1547.9 975.4 1550.4 974.3Z"/><path d="M1561.5 973.2C1565.7 972.7 1567.7 973.3 1576.8 970.1C1585.8 967.0 1590.8 964.4 1595.5 961.4C1600.2 958.3 1599.5 957.1 1594.2 958.6C1589.0 960.2 1584.5 963.8 1575.7 967.3C1566.9 970.8 1564.9 970.1 1561.1 971.7C1557.3 973.3 1557.3 973.6 1561.5 973.2Z"/><path d="M1449.4 1159.8C1449.2 1161.0 1446.9 1163.8 1446.9 1166.1C1446.9 1168.3 1446.4 1169.0 1449.4 1171.0C1452.4 1173.0 1460.1 1173.5 1461.8 1176.0C1463.6 1178.5 1460.1 1179.2 1458.1 1183.5C1456.1 1187.7 1454.1 1195.1 1451.9 1197.1C1449.7 1199.1 1446.9 1195.4 1446.9 1193.4C1446.9 1191.4 1450.0 1190.3 1451.9 1187.2C1453.8 1184.1 1457.0 1180.9 1456.3 1177.9C1455.5 1174.9 1450.2 1174.6 1448.2 1172.3C1446.2 1169.9 1446.3 1168.4 1446.3 1166.1C1446.3 1163.7 1447.5 1161.7 1448.2 1160.5C1448.8 1159.2 1449.7 1158.7 1449.4 1159.8Z"/><path d="M1588.6 1062.3C1591.0 1061.7 1597.9 1061.6 1601.0 1060.5C1604.1 1059.3 1603.3 1058.7 1604.1 1056.7C1605.0 1054.7 1604.6 1051.8 1605.4 1050.5C1606.1 1049.3 1607.2 1049.1 1607.9 1050.5C1608.5 1051.9 1605.6 1056.9 1608.5 1057.4C1611.3 1057.9 1617.2 1054.0 1622.2 1053.0C1627.1 1052.0 1629.9 1052.0 1633.4 1052.4C1636.8 1052.8 1637.5 1053.3 1639.6 1054.9C1641.7 1056.5 1644.9 1059.8 1643.9 1060.5C1642.9 1061.1 1639.0 1058.3 1634.6 1058.0C1630.2 1057.6 1627.1 1058.2 1622.2 1058.6C1617.2 1059.0 1611.2 1059.0 1609.7 1059.8C1608.2 1060.6 1612.7 1061.3 1614.7 1062.6C1616.7 1063.8 1616.4 1064.9 1619.7 1066.1C1622.9 1067.2 1626.9 1067.1 1630.9 1068.5C1634.8 1070.0 1637.0 1071.3 1639.6 1073.5C1642.1 1075.8 1643.6 1077.7 1643.6 1079.7C1643.6 1081.7 1642.1 1083.2 1639.6 1083.5C1637.0 1083.7 1634.1 1082.6 1630.9 1081.0C1627.6 1079.4 1625.6 1077.6 1623.4 1075.4C1621.2 1073.1 1621.3 1070.5 1619.7 1069.8C1618.1 1069.0 1615.8 1069.9 1615.3 1071.7C1614.8 1073.4 1615.9 1075.4 1617.2 1078.5C1618.4 1081.6 1621.3 1085.0 1621.5 1087.2C1621.8 1089.4 1620.3 1089.7 1618.4 1089.4C1616.6 1089.2 1614.5 1087.9 1612.2 1085.9C1610.0 1084.0 1607.9 1082.2 1607.2 1079.7C1606.6 1077.2 1607.5 1076.3 1609.1 1073.5C1610.7 1070.8 1614.7 1068.0 1615.3 1066.1C1615.9 1064.1 1615.1 1064.0 1612.2 1063.6C1609.4 1063.1 1605.6 1063.8 1601.0 1063.8C1596.4 1063.8 1591.7 1063.9 1589.2 1063.6C1586.7 1063.3 1586.2 1062.9 1588.6 1062.3Z"/><path d="M1560.3 1069.7C1563.8 1069.3 1566.6 1067.6 1572.8 1066.0C1578.9 1064.4 1580.6 1064.9 1583.3 1063.7C1585.9 1062.4 1585.7 1061.2 1582.7 1061.2C1579.7 1061.2 1578.2 1061.8 1572.1 1063.6C1566.0 1065.4 1562.8 1066.2 1559.7 1067.8C1556.5 1069.5 1556.8 1070.2 1560.3 1069.7Z"/><path d="M1600.4 956.0C1604.0 955.7 1607.5 953.8 1612.8 952.1C1618.0 950.4 1618.2 950.7 1620.1 949.7C1621.9 948.7 1621.8 948.3 1619.7 948.3C1617.6 948.3 1617.5 948.4 1612.1 949.7C1606.7 951.0 1602.7 951.5 1599.6 953.2C1596.5 954.9 1596.9 956.3 1600.4 956.0Z"/><path d="M1610.9 954.6C1614.5 956.1 1617.9 957.4 1624.8 957.7C1631.7 958.0 1633.6 956.5 1636.7 955.7C1639.9 954.9 1639.8 954.9 1636.6 954.7C1633.5 954.6 1631.7 955.9 1625.0 955.2C1618.2 954.5 1615.2 952.3 1611.5 952.1C1607.7 952.0 1607.4 953.1 1610.9 954.6Z"/><path d="M1728.1 884.7C1732.1 885.2 1736.2 885.6 1743.2 884.6C1750.1 883.6 1751.4 882.3 1754.3 881.1C1757.2 879.9 1757.1 880.0 1754.1 880.1C1751.0 880.3 1749.7 880.9 1742.8 881.6C1735.9 882.3 1731.9 881.9 1728.0 882.7C1724.1 883.6 1724.1 884.2 1728.1 884.7Z"/><path d="M-11.5 0C-6.325 -9.45 5.175 -8.504999999999999 11.5 0C5.175 8.504999999999999 -6.325 9.45 -11.5 0Z" transform="translate(1376.4 648.8) rotate(68)"/><path d="M-13.5 0C-7.425000000000001 -9.1 6.075 -8.19 13.5 0C6.075 8.19 -7.425000000000001 9.1 -13.5 0Z" transform="translate(1419.6 671.2) rotate(-38)"/><path d="M-14.75 0C-8.1125 -9.799999999999999 6.6375 -8.819999999999999 14.75 0C6.6375 8.819999999999999 -8.1125 9.799999999999999 -14.75 0Z" transform="translate(1444.2 718.6) rotate(-55)"/><path d="M-13.0 0C-7.15 -11.2 5.8500000000000005 -10.08 13.0 0C5.8500000000000005 10.08 -7.15 11.2 -13.0 0Z" transform="translate(1476.1 701.4) rotate(-100)"/><path d="M-14.0 0C-7.700000000000001 -7.419999999999999 6.3 -6.677999999999999 14.0 0C6.3 6.677999999999999 -7.700000000000001 7.419999999999999 -14.0 0Z" transform="translate(1494.2 708.5) rotate(-21)"/><path d="M-11.25 0C-6.187500000000001 -6.3 5.0625 -5.67 11.25 0C5.0625 5.67 -6.187500000000001 6.3 -11.25 0Z" transform="translate(1494.2 747.8) rotate(-48)"/><path d="M-12.0 0C-6.6000000000000005 -7.419999999999999 5.4 -6.677999999999999 12.0 0C5.4 6.677999999999999 -6.6000000000000005 7.419999999999999 -12.0 0Z" transform="translate(1562.6 778.5) rotate(-37)"/><path d="M-11.0 0C-6.050000000000001 -5.25 4.95 -4.7250000000000005 11.0 0C4.95 4.7250000000000005 -6.050000000000001 5.25 -11.0 0Z" transform="translate(1564.4 793.4) rotate(8)"/><path d="M-12.0 0C-6.6000000000000005 -7.699999999999999 5.4 -6.93 12.0 0C5.4 6.93 -6.6000000000000005 7.699999999999999 -12.0 0Z" transform="translate(1797.7 756.6) rotate(-67)"/><path d="M-15.0 0C-8.25 -6.089999999999999 6.75 -5.480999999999999 15.0 0C6.75 5.480999999999999 -8.25 6.089999999999999 -15.0 0Z" transform="translate(1839.3 779.6) rotate(-24)"/><path d="M-13.5 0C-7.425000000000001 -6.089999999999999 6.075 -5.480999999999999 13.5 0C6.075 5.480999999999999 -7.425000000000001 6.089999999999999 -13.5 0Z" transform="translate(1840.6 807.9) rotate(37)"/><path d="M-14.5 0C-7.9750000000000005 -6.089999999999999 6.525 -5.480999999999999 14.5 0C6.525 5.480999999999999 -7.9750000000000005 6.089999999999999 -14.5 0Z" transform="translate(1803.5 828.1) rotate(-34)"/><path d="M-15.0 0C-8.25 -7.35 6.75 -6.615 15.0 0C6.75 6.615 -8.25 7.35 -15.0 0Z" transform="translate(1613.7 810.7) rotate(20)"/><path d="M-14.75 0C-8.1125 -7.699999999999999 6.6375 -6.93 14.75 0C6.6375 6.93 -8.1125 7.699999999999999 -14.75 0Z" transform="translate(1644.1 804.8) rotate(-51)"/><path d="M-8.75 0C-4.8125 -7.0 3.9375 -6.3 8.75 0C3.9375 6.3 -4.8125 7.0 -8.75 0Z" transform="translate(1705.9 821.2) rotate(-85)"/><path d="M-15.5 0C-8.525 -5.25 6.9750000000000005 -4.7250000000000005 15.5 0C6.9750000000000005 4.7250000000000005 -8.525 5.25 -15.5 0Z" transform="translate(1724.3 825.6) rotate(-5)"/><path d="M-12.0 0C-6.6000000000000005 -7.699999999999999 5.4 -6.93 12.0 0C5.4 6.93 -6.6000000000000005 7.699999999999999 -12.0 0Z" transform="translate(1716.9 837.4) rotate(50)"/><path d="M-12.8 0C-7.040000000000001 -6.58 5.760000000000001 -5.922000000000001 12.8 0C5.760000000000001 5.922000000000001 -7.040000000000001 6.58 -12.8 0Z" transform="translate(1491.9 824.4) rotate(41)"/><path d="M-12.0 0C-6.6000000000000005 -6.089999999999999 5.4 -5.480999999999999 12.0 0C5.4 5.480999999999999 -6.6000000000000005 6.089999999999999 -12.0 0Z" transform="translate(1557.0 832.9) rotate(-34)"/><path d="M-8.75 0C-4.8125 -6.58 3.9375 -5.922000000000001 8.75 0C3.9375 5.922000000000001 -4.8125 6.58 -8.75 0Z" transform="translate(1460.0 873.9) rotate(50)"/><path d="M-11.0 0C-6.050000000000001 -5.6 4.95 -5.04 11.0 0C4.95 5.04 -6.050000000000001 5.6 -11.0 0Z" transform="translate(1455.4 898.4) rotate(-29)"/><path d="M-12.0 0C-6.6000000000000005 -7.419999999999999 5.4 -6.677999999999999 12.0 0C5.4 6.677999999999999 -6.6000000000000005 7.419999999999999 -12.0 0Z" transform="translate(1479.0 906.6) rotate(58)"/><path d="M-14.5 0C-7.9750000000000005 -7.419999999999999 6.525 -6.677999999999999 14.5 0C6.525 6.677999999999999 -7.9750000000000005 7.419999999999999 -14.5 0Z" transform="translate(1584.9 882.6) rotate(-12)"/><path d="M-8.75 0C-4.8125 -8.75 3.9375 -7.875 8.75 0C3.9375 7.875 -4.8125 8.75 -8.75 0Z" transform="translate(1604.6 888.8) rotate(60)"/><path d="M-7.2 0C-3.9600000000000004 -5.25 3.24 -4.7250000000000005 7.2 0C3.24 4.7250000000000005 -3.9600000000000004 5.25 -7.2 0Z" transform="translate(1583.9 913.3) rotate(88)"/><path d="M-9.7 0C-5.335 -4.8999999999999995 4.365 -4.409999999999999 9.7 0C4.365 4.409999999999999 -5.335 4.8999999999999995 -9.7 0Z" transform="translate(1601.7 917.7) rotate(-18)"/><path d="M-12.5 0C-6.875000000000001 -6.58 5.625 -5.922000000000001 12.5 0C5.625 5.922000000000001 -6.875000000000001 6.58 -12.5 0Z" transform="translate(1636.4 940.1) rotate(-22)"/><path d="M-14.0 0C-7.700000000000001 -7.419999999999999 6.3 -6.677999999999999 14.0 0C6.3 6.677999999999999 -7.700000000000001 7.419999999999999 -14.0 0Z" transform="translate(1660.9 972.0) rotate(57)"/><path d="M-14.25 0C-7.8375 -6.089999999999999 6.4125000000000005 -5.480999999999999 14.25 0C6.4125000000000005 5.480999999999999 -7.8375 6.089999999999999 -14.25 0Z" transform="translate(1690.5 980.1) rotate(-29)"/><path d="M-10.0 0C-5.5 -5.6 4.5 -5.04 10.0 0C4.5 5.04 -5.5 5.6 -10.0 0Z" transform="translate(1602.5 983.2) rotate(-50)"/><path d="M-15.25 0C-8.387500000000001 -5.25 6.8625 -4.7250000000000005 15.25 0C6.8625 4.7250000000000005 -8.387500000000001 5.25 -15.25 0Z" transform="translate(1836.2 1008.3) rotate(-23)"/><path d="M-12.5 0C-6.875000000000001 -5.6 5.625 -5.04 12.5 0C5.625 5.04 -6.875000000000001 5.6 -12.5 0Z" transform="translate(1597.6 986.1) rotate(-36)"/><path d="M-12.8 0C-7.040000000000001 -6.58 5.760000000000001 -5.922000000000001 12.8 0C5.760000000000001 5.922000000000001 -7.040000000000001 6.58 -12.8 0Z" transform="translate(1548.3 1091.8) rotate(-43)"/><path d="M-12.0 0C-6.6000000000000005 -6.089999999999999 5.4 -5.480999999999999 12.0 0C5.4 5.480999999999999 -6.6000000000000005 6.089999999999999 -12.0 0Z" transform="translate(1584.7 1113.5) rotate(-43)"/><path d="M-12.0 0C-6.6000000000000005 -6.58 5.4 -5.922000000000001 12.0 0C5.4 5.922000000000001 -6.6000000000000005 6.58 -12.0 0Z" transform="translate(1605.8 1116.0) rotate(45)"/><path d="M-12.0 0C-6.6000000000000005 -5.25 5.4 -4.7250000000000005 12.0 0C5.4 4.7250000000000005 -6.6000000000000005 5.25 -12.0 0Z" transform="translate(1490.7 1200.5) rotate(28)"/><path d="M-3.5 0C-1.9250000000000003 -2.2399999999999998 1.575 -2.016 3.5 0C1.575 2.016 -1.9250000000000003 2.2399999999999998 -3.5 0Z" transform="translate(1453.1 1154.2) rotate(-35)"/></g>
<text x='1705.5 1705.5 1705.5 1705.5 1705.5 1705.5' y='1177.5 1249.2 1320.9 1392.6 1464.3 1536.0' font-size='76' text-anchor='middle' fill='#000' stroke='#000' stroke-width='0.8' font-family='"Liberation Serif", "DejaVu Serif", serif'>FOURTY</text>
<text transform='translate(1585 0) scale(1.62 1)' x='0 0 0 0 0 0' y='1221 1268.5 1320 1370 1421 1471' font-size='34' font-weight='200' text-anchor='middle' font-family='"DejaVu Sans Light","DejaVu Sans",sans-serif' fill='#000'>MILLER</text>
<text transform='translate(1824 0) scale(1.62 1)' x='0 0 0 0 0 0' y='1219 1268.5 1320 1370 1420 1470' font-size='34' font-weight='200' text-anchor='middle' font-family='"DejaVu Sans Light","DejaVu Sans",sans-serif' fill='#000'>STREET</text>
<g transform="translate(79 197)" ><path d="M10 4H32L39 11V43H10Z" fill="#fff" stroke="#d9d9d9" stroke-width="1.2"/><path d="M11 43.6H39.5" stroke="#cfcfcf" stroke-width="1.5"/><path d="M32 4V11H39Z" fill="#f0f0f0" stroke="#d4d4d4" stroke-width="1"/><circle cx="38.6" cy="20.3" r="7.8" fill="#3566a5"/><circle cx="38.6" cy="20.3" r="7.8" fill="none" stroke="#2c568f" stroke-width="1"/><path d="M38.6 15.3V25.3M33.6 20.3H43.6" stroke="#fff" stroke-width="3.2"/></g>
<g transform="translate(190 197)" ><path d="M4.5 4Q4.5 2.5 6 2.5H17.5L21 6.5H42Q43.6 6.5 43.6 8V30H4.5Z" fill="#c9b48f" stroke="#b09a72" stroke-width="1"/><rect x="8" y="9.5" width="32" height="20" fill="#b9a27a"/><path d="M12 10.8H39.3V32H12Z" fill="#fbfbfb" stroke="#c8c8c8" stroke-width="0.8"/><path d="M16 15.5H35M16 18.7H35M16 21.9H33M16 25.1H29" stroke="#c9c9c9" stroke-width="1.2"/><path d="M0.6 30.5Q0.3 29 1.8 29H13.5Q15 29 16 27.8L17 26.8Q18 25.8 19.5 25.8H46.4Q47.9 25.8 47.6 27.3L44.8 42.5Q44.5 44 43 44H5Q3.5 44 3.2 42.5Z" fill="#ead8b8" stroke="#c5ad85" stroke-width="1"/><path d="M2.5 31H14Q16 31 17.2 29.6L18 28.6Q18.8 27.8 20 27.8H45.5" fill="none" stroke="#f6ecd8" stroke-width="1.2"/></g>
<g transform="translate(301 197)" ><ellipse cx="24" cy="44.3" rx="19" ry="2" fill="#3060b0" opacity="0.18"/><path d="M11.8 0.8H36.4L40.2 5.2V42Q40.2 43.4 38.8 43.4H8.9Q7.5 43.4 7.5 42V5.2Z" fill="#5a8fd8" stroke="#2f62ab" stroke-width="1.4"/><path d="M12.4 2H35.8L38.6 5.2H9.6Z" fill="#86aee6"/><rect x="10.4" y="8.8" width="26.8" height="17" fill="#4a7ecb" stroke="#376bb8" stroke-width="1"/><rect x="11.4" y="24.6" width="24.8" height="2.2" fill="#2b2b2b"/><rect x="9.4" y="27.4" width="28.8" height="14.2" fill="#5286d4" stroke="#2f62ab" stroke-width="1"/><path d="M10 28.4H37.6" stroke="#8db5ea" stroke-width="1"/><path d="M19.6 34.2V36.8H28.6V34.2" fill="none" stroke="#1f4f95" stroke-width="2.6" stroke-linejoin="round"/><path d="M19.6 34.2V36.8H28.6V34.2" fill="none" stroke="#fff" stroke-width="1.5" stroke-linejoin="round"/><circle cx="20.2" cy="16.6" r="1.2" fill="#fff"/><circle cx="27.8" cy="16.6" r="1.2" fill="#fff"/><path d="M24 4.6V23.5" stroke="#8c8c8c" stroke-width="4.4" stroke-linecap="round"/><path d="M16.2 21Q18 22.5 24 25.6Q30 22.5 31.8 21" fill="none" stroke="#8c8c8c" stroke-width="4.6" stroke-linecap="round" stroke-linejoin="round"/><path d="M24 4.6V23.5" stroke="#fff" stroke-width="2.8" stroke-linecap="round"/><path d="M16.2 21Q18 22.5 24 25.6Q30 22.5 31.8 21" fill="none" stroke="#fff" stroke-width="3" stroke-linecap="round" stroke-linejoin="round"/></g>
<g transform="translate(412 197)" ><ellipse cx="24" cy="42.2" rx="21" ry="1.6" fill="#000" opacity="0.15"/><rect x="1" y="25.5" width="46" height="7.5" rx="2" fill="#4a4a4a"/><path d="M1.9 31.8H40.7V40.2Q40.7 41.7 39.2 41.7H3.4Q1.9 41.7 1.9 40.2Z" fill="#1c1c1c"/><rect x="34.5" y="28" width="6" height="13.5" fill="#3c4046"/><rect x="0.9" y="5.6" width="46.2" height="21.4" rx="3.4" fill="url(#gPrn)" stroke="#3a3a3a" stroke-width="1.5"/><path d="M8.6 7H38.5Q40.7 7 40.7 8.6V9.2H31L28.6 11.9H8.6Q7.4 11.9 7.4 10.7V8.2Q7.4 7 8.6 7Z" fill="#4c4c4c"/><path d="M11 9.4H13M15 9.4H16.2M21 9.4H26" stroke="#b5b5b5" stroke-width="0.9"/><path d="M2 18.5H46" stroke="#f2f2f2" stroke-width="1.2"/><path d="M2 20.2H46" stroke="#a8a8a8" stroke-width="1"/><path d="M7.6 40.3V22.8H35.2V40.3Z" fill="#111"/><path d="M8.8 40V23.8H34V40Z" fill="#fbfbfb"/><ellipse cx="22" cy="27" rx="8.5" ry="2.2" fill="#9cc277" transform="rotate(6 22 27)"/><ellipse cx="28" cy="34.5" rx="3.6" ry="2.2" fill="#a5c685" transform="rotate(30 28 34.5)"/><ellipse cx="15.5" cy="32" rx="1.6" ry="1.3" fill="#bcd6a5"/><ellipse cx="20" cy="34.2" rx="1.6" ry="1.3" fill="#b0cf95"/><ellipse cx="12" cy="29.2" rx="1.3" ry="1" fill="#c8dcb5"/><path d="M7 40.6H35.5" stroke="#3a3a3a" stroke-width="1.4"/><rect x="29.5" y="38.6" width="3.6" height="1.8" fill="#4a90d9"/></g>
<g transform="translate(565 197)" ><path d="M14 2H35L46 13V46H14Z" fill="url(#gPaper)" stroke="#1a1a1a" stroke-width="4" stroke-linejoin="round"/><path d="M35 2V13H46" fill="#fff" stroke="#1a1a1a" stroke-width="3" stroke-linejoin="round"/><path d="M0 25H22" stroke="#000" stroke-width="4"/><path d="M20.5 16.5L30.5 25L20.5 33.5Z" fill="#000"/></g>
<g transform="translate(676 197)" ><path d="M2 2H23L34 13V46H2Z" fill="url(#gPaper)" stroke="#1a1a1a" stroke-width="4" stroke-linejoin="round"/><path d="M23 2V13H34" fill="#fff" stroke="#1a1a1a" stroke-width="3" stroke-linejoin="round"/><path d="M18 25H40" stroke="#000" stroke-width="4"/><path d="M38.5 16.5L48.5 25L38.5 33.5Z" fill="#000"/></g>
<g transform="translate(829 197)" ><path d="M2 22.5L14.5 9.6Q17 8 17 11V17.5H33C42 17.5 46.3 23 46.3 29.5C46.3 37 40 41.5 33 41.5H27V34H33C36.5 34 38.5 32 38.5 29.5C38.5 27 36.5 25.5 33 25.5H17V33.5Q17 37 14.5 35.2Z" fill="url(#gYel)" stroke="#c4a000" stroke-width="1.6" stroke-linejoin="round"/><path d="M4.5 22.5L15 11.5V19.3H33C40 19.3 44 23.5 44.3 28" fill="none" stroke="#fff" stroke-opacity="0.55" stroke-width="1.4"/><rect x="24" y="32" width="10" height="11" fill="url(#gFade)"/></g>
<g transform="translate(940 197)" ><g transform="translate(48 0) scale(-1 1)" opacity="0.28"><path d="M2 22.5L14.5 9.6Q17 8 17 11V17.5H33C42 17.5 46.3 23 46.3 29.5C46.3 37 40 41.5 33 41.5H27V34H33C36.5 34 38.5 32 38.5 29.5C38.5 27 36.5 25.5 33 25.5H17V33.5Q17 37 14.5 35.2Z" fill="url(#gGrn)" stroke="#5d9a36" stroke-width="1.6" stroke-linejoin="round"/><path d="M4.5 22.5L15 11.5V19.3H33C40 19.3 44 23.5 44.3 28" fill="none" stroke="#fff" stroke-opacity="0.55" stroke-width="1.4"/><rect x="24" y="32" width="10" height="11" fill="url(#gFade)"/></g></g>
<g transform="translate(1093 197)" ><g opacity="0.85"><ellipse cx="31" cy="43" rx="12" ry="1.6" fill="#000" opacity="0.25"/><rect x="20.3" y="21" width="21.7" height="21.5" rx="1.2" fill="#fbfbfb" stroke="#7d7d7d" stroke-width="1.1"/><rect x="23.3" y="24.1" width="15.7" height="2.3" fill="#c4c4c4"/><rect x="23.3" y="28.9" width="15.7" height="2.3" fill="#c4c4c4"/><rect x="23.3" y="33.8" width="15.7" height="2.3" fill="#c4c4c4"/><rect x="23.3" y="38.6" width="8.6" height="2.3" fill="#c4c4c4"/><rect x="6.8" y="7.8" width="22.2" height="21.7" rx="1.2" fill="#fbfbfb" stroke="#7d7d7d" stroke-width="1.1"/><rect x="9.8" y="10.9" width="16.2" height="2.3" fill="#c4c4c4"/><rect x="9.8" y="15.8" width="16.2" height="2.3" fill="#c4c4c4"/><rect x="9.8" y="20.7" width="16.2" height="2.3" fill="#c4c4c4"/><rect x="9.8" y="25.6" width="8.9" height="2.3" fill="#c4c4c4"/></g></g>
<g transform="translate(1204 197)" ><path d="M14.2 6.8Q12.2 11 14 16L22.3 31L25.8 28.2Z" fill="#e3e3e3" stroke="#777" stroke-width="1"/><path d="M34.8 6.8Q36.8 11 35 16L26.7 31L23.2 28.2Z" fill="#d2d2d2" stroke="#777" stroke-width="1"/><circle cx="24.5" cy="28.3" r="1.1" fill="#888"/><ellipse cx="17.2" cy="36.3" rx="4.9" ry="3.9" transform="rotate(-38 17.2 36.3)" fill="none" stroke="#a40000" stroke-width="3.8"/><ellipse cx="31.8" cy="36.3" rx="4.9" ry="3.9" transform="rotate(38 31.8 36.3)" fill="none" stroke="#a40000" stroke-width="3.8"/><ellipse cx="17.2" cy="36.3" rx="4.9" ry="3.9" transform="rotate(-38 17.2 36.3)" fill="none" stroke="#e62222" stroke-width="2.4"/><ellipse cx="31.8" cy="36.3" rx="4.9" ry="3.9" transform="rotate(38 31.8 36.3)" fill="none" stroke="#e62222" stroke-width="2.4"/><path d="M20.5 32.5L23.5 29.5M28.5 32.5L25.5 29.5" stroke="#e62222" stroke-width="2.6"/></g>
<g transform="translate(1315 197)" ><ellipse cx="24" cy="41.8" rx="21" ry="1.8" fill="#000" opacity="0.22"/><rect x="6.7" y="7.8" width="31.1" height="32.7" rx="2.5" fill="#d29a4a" stroke="#b07a2c" stroke-width="1.2"/><rect x="8" y="9" width="28.5" height="30.3" rx="1.8" fill="none" stroke="#e3b670" stroke-width="1"/><path d="M17.5 2.2H27.5Q29 2.2 29 3.7V6.5H31Q32.4 6.5 32.4 8V11.8H12.6V8Q12.6 6.5 14 6.5H16V3.7Q16 2.2 17.5 2.2Z" fill="#cfcfcf" stroke="#8a8a8a" stroke-width="1"/><rect x="17.5" y="4" width="10" height="3" fill="#e9e9e9"/><rect x="21" y="21.7" width="20.8" height="20.4" rx="1.2" fill="#fbfbfb" stroke="#7d7d7d" stroke-width="1.1"/><rect x="24" y="24.8" width="14.8" height="2.3" fill="#c4c4c4"/><rect x="24" y="29.3" width="14.8" height="2.3" fill="#c4c4c4"/><rect x="24" y="33.7" width="14.8" height="2.3" fill="#c4c4c4"/><rect x="24" y="38.2" width="8.1" height="2.3" fill="#c4c4c4"/></g>
<g transform="translate(1468 197)" ><rect x="2.1999999999999997" y="2.1999999999999997" width="25.9" height="25.5" rx="1" fill="url(#gBlue)" stroke="#15181c" stroke-width="3.8"/><rect x="11.3" y="10.700000000000001" width="34.800000000000004" height="34.900000000000006" rx="1" fill="url(#gBlue)" stroke="#15181c" stroke-width="3.8"/></g>
<g transform="translate(1579 197)" ><rect x="2.0" y="2.0" width="25.900000000000002" height="25.900000000000002" rx="1" fill="url(#gBlue)" stroke="#202428" stroke-width="3.4"/><rect x="3.2" y="3.2" width="23.5" height="23.5" fill="none" stroke="#e8eef6" stroke-width="1.2"/><rect x="11.1" y="10.5" width="35.1" height="35.300000000000004" rx="1" fill="#e9eef5" stroke="#202428" stroke-width="3.4"/><rect x="16.5" y="16" width="24.3" height="24.3" fill="url(#gBlueR)" opacity="0.95"/><path d="M22.5 25V19.2Q22.5 17.5 24.2 17.5H32.6Q34.3 17.5 34.3 19.2V25" fill="none" stroke="#000" stroke-width="3"/><rect x="20" y="25.6" width="17.2" height="12" rx="1" fill="url(#gLockS)" stroke="#000" stroke-width="2.6"/></g>
<g transform="translate(1690 197)" ><rect x="2.0" y="2.0" width="25.900000000000002" height="25.900000000000002" rx="1" fill="url(#gBlue)" stroke="#202428" stroke-width="3.4"/><rect x="3.2" y="3.2" width="23.5" height="23.5" fill="none" stroke="#e8eef6" stroke-width="1.2"/><rect x="11.1" y="10.5" width="35.1" height="35.300000000000004" rx="1" fill="#e9eef5" stroke="#202428" stroke-width="3.4"/><rect x="16.5" y="16" width="24.3" height="24.3" fill="url(#gBlueR)" opacity="0.95"/><path d="M25.5 17.5H32.6Q34.3 17.5 34.3 19.2V25" fill="none" stroke="#000" stroke-width="3"/><rect x="20" y="25.6" width="17.2" height="12" rx="1" fill="url(#gLockG)" stroke="#000" stroke-width="2.6"/></g>
<g transform="translate(1843 197)" ><rect x="0" y="0" width="5.8" height="5.8" fill="#000"/><rect x="42.2" y="0" width="5.8" height="5.8" fill="#000"/><rect x="0" y="42.2" width="5.8" height="5.8" fill="#000"/><rect x="42.2" y="42.2" width="5.8" height="5.8" fill="#000"/><rect x="8.4" y="20" width="25.6" height="19.8" fill="url(#gBlueR)" stroke="#222" stroke-width="3.4"/><circle cx="31.5" cy="15.7" r="11.3" fill="url(#gBlueR)" stroke="#222" stroke-width="3.4"/><circle cx="31.5" cy="15.7" r="8.8" fill="none" stroke="#fff" stroke-opacity="0.6" stroke-width="1.2"/></g>
<g transform="translate(1954 197)" ><rect x="15.2" y="0" width="5.8" height="5.8" fill="#000"/><rect x="42.2" y="0" width="5.8" height="5.8" fill="#000"/><rect x="0" y="12" width="5.8" height="5.8" fill="#000"/><rect x="42.2" y="27" width="5.8" height="5.8" fill="#000"/><rect x="0" y="42.2" width="5.8" height="5.8" fill="#000"/><rect x="36.2" y="42.2" width="5.8" height="5.8" fill="#000"/><rect x="8.4" y="20" width="25.6" height="19.8" fill="url(#gYelSq)" stroke="#222" stroke-width="3.4"/><rect x="15.2" y="27" width="5.8" height="5.8" fill="#000"/><circle cx="31.6" cy="15.7" r="11.3" fill="url(#gBlueR)" stroke="#222" stroke-width="3.4"/><circle cx="31.6" cy="15.7" r="8.8" fill="none" stroke="#fff" stroke-opacity="0.6" stroke-width="1.2"/></g>
<g transform="translate(2107 197)" ><path d="M5 5H48V25L30.6 36L20 46L5 47.8Z" fill="#fff"/><path d="M30.6 37L48 26" stroke="#000" stroke-opacity="0.12" stroke-width="3"/><rect x="0.1" y="0.4" width="47.9" height="5" fill="url(#gFrT)"/><rect x="0.1" y="0.4" width="5.7" height="47.6" fill="url(#gFrL)"/><path d="M36.6 15.2L47.5 4.3L48 23.7H44.5L41.5 22.7Z" fill="url(#gOrange2)"/><path d="M46.5 3.3L34.6 15.7" stroke="#000" stroke-width="4.6" stroke-linecap="round"/><path d="M36.6 15.2L42.5 22.9L47.2 25.2" fill="none" stroke="#000" stroke-width="3.6" stroke-linejoin="round" stroke-linecap="round"/><path d="M33 16L24 26.5" stroke="#3a3a3a" stroke-width="3"/><path d="M32.6 18.2L38.6 21.6L29.6 32.6L24.7 28.6Z" fill="url(#gFerr)"/><path d="M38.8 21.5L29.8 32.7" stroke="#111" stroke-width="1.6"/><path d="M0.4 47.5C6.8 42.5 10.8 32.6 18.7 28.6L24.7 26.7L30.6 34.6C30.6 40.5 22.7 46.5 0.4 47.5Z" fill="url(#gBrush)"/></g>
<g transform="translate(2218 197)" ><text x='24' y='47.4' font-family='"Liberation Serif", "DejaVu Serif", serif' font-weight='bold' font-size='72' text-anchor='middle' fill='#000' stroke='#000' stroke-width='1.6' textLength='46.5' lengthAdjust='spacingAndGlyphs'>T</text></g>
<g transform="translate(2329 197)" ><path d="M1.5 25.3H34.5L46.5 40.8H13.5Z" fill="url(#gPaper)" stroke="#333" stroke-width="3" stroke-linejoin="round"/><path d="M1.5 16.3H34.5L46.5 31.8H13.5Z" fill="url(#gPaper)" stroke="#333" stroke-width="3" stroke-linejoin="round"/><path d="M1.5 7.3H34.5L46.5 22.8H13.5Z" fill="url(#gPaper)" stroke="#333" stroke-width="3" stroke-linejoin="round"/></g>
<g transform="translate(2440 197)" ><rect x="2" y="2" width="44" height="44" fill="url(#gPaper)" stroke="#000" stroke-width="3.6"/><rect x="3.8" y="3.8" width="40.4" height="5.6" fill="url(#gTitle)"/><path d="M2 11.2H46" stroke="#000" stroke-width="3"/><path d="M20 19L10 27.5L20 36M28 19L38 27.5L28 36" fill="none" stroke="#333" stroke-width="3.4" stroke-linejoin="miter"/></g>
<g transform="translate(2551 197)" ><rect x="2" y="2" width="44" height="44" fill="url(#gPaper)" stroke="#000" stroke-width="3.6"/><rect x="3.8" y="3.8" width="40.4" height="5.6" fill="url(#gTitle)"/><path d="M2 11.2H46" stroke="#000" stroke-width="3"/><text x='24' y='38.5' font-family='"Liberation Sans", "DejaVu Sans", sans-serif' font-size='29' font-weight='bold' text-anchor='middle' fill='#111' textLength='31'>{ }</text></g>
<g transform="translate(2662 197)" ><rect x="1.5" y="0.3" width="2.8" height="47.2" rx="1.2" fill="#b00000"/><rect x="8.5" y="1.9000000000000001" width="16.6" height="10.8" rx="1" fill="url(#gBlueR)" stroke="#1c1c1c" stroke-width="3.2"/><rect x="11.5" y="6.3" width="10.600000000000001" height="3" fill="#fff" opacity="0.55"/><rect x="8.5" y="19.900000000000002" width="38.8" height="8.5" rx="1" fill="url(#gBlueR)" stroke="#1c1c1c" stroke-width="3.2"/><rect x="11.5" y="23.15" width="32.8" height="3" fill="#fff" opacity="0.55"/><rect x="8.5" y="34.800000000000004" width="29.900000000000002" height="11.100000000000001" rx="1" fill="url(#gBlueR)" stroke="#1c1c1c" stroke-width="3.2"/><rect x="11.5" y="39.35" width="23.900000000000002" height="3" fill="#fff" opacity="0.55"/></g>
<g transform="translate(2815 197)" ><g opacity="0.85"><path d="M7.3 2.8H30L37.4 10V43H7.3Z" fill="#fdfdfd" stroke="#d6d6d6" stroke-width="1.1"/><path d="M30 2.8V10H37.4Z" fill="#f0f0f0" stroke="#cfcfcf" stroke-width="0.9"/><g transform="translate(17.5 16) scale(0.88)"><path d="M0 6.5Q-0.5 2.5 3 0.6L3.6 4.4L6.6 5.2L8.8 2.6L7.6 -1Q12 0 12.4 4.6Q12.6 7 11 8.6L30 27.5Q31.5 29.3 29.8 31Q28 32.6 26.4 31L7.4 12Q4 13.4 1.6 11Q0.2 9.6 0 6.5Z" fill="#dedede" stroke="#9a9a9a" stroke-width="1"/></g></g></g>
<g transform="translate(2926 197)" ><ellipse cx="27" cy="43.5" rx="19" ry="1.8" fill="#000" opacity="0.18"/><g transform="translate(6 3) scale(1.28)"><path d="M0 6.5Q-0.5 2.5 3 0.6L3.6 4.4L6.6 5.2L8.8 2.6L7.6 -1Q12 0 12.4 4.6Q12.6 7 11 8.6L30 27.5Q31.5 29.3 29.8 31Q28 32.6 26.4 31L7.4 12Q4 13.4 1.6 11Q0.2 9.6 0 6.5Z" fill="#e6e6e6" stroke="#8a8a8a" stroke-width="1"/></g><path d="M45.8 2.2L48.2 4.6L25 28L23 26Z" fill="#c9c9c9" stroke="#7d7d7d" stroke-width="0.9"/><path d="M46 1.6L48.8 4.4L46.8 6.6L43.8 3.6Z" fill="#efefef" stroke="#7d7d7d" stroke-width="0.8"/><path d="M22.8 23.6L27.4 28.2L12.5 43Q10 45.3 7.3 43.5Q4.8 41.2 6.6 38.2Z" fill="#3f78bd" stroke="#1f4f8f" stroke-width="1.1"/><path d="M22.5 26L10 38.8" stroke="#8fb6e6" stroke-width="1.8" stroke-linecap="round"/></g>
<g transform="translate(79 323)" ><rect x="12" y="8.5" width="24" height="6.8" fill="#000"/><rect x="20.6" y="0" width="6.8" height="24" fill="#000"/><rect x="16.7" y="28.7" width="14.6" height="17.6" rx="1" fill="#b4b4f0" fill-opacity="0.85" stroke="#0000d4" stroke-width="3.4"/><path d="M1.5 37.3L46.5 37.3" stroke="#666" stroke-width="3" stroke-linecap="round"/><rect x="16.7" y="28.7" width="14.6" height="17.6" fill="#b4b4f0" fill-opacity="0.55"/></g>
<g transform="translate(297 323)" ><rect x="12" y="8.5" width="24" height="6.8" fill="#000"/><path d="M1.5 37.3L46.5 37.3" stroke="#666" stroke-width="3" stroke-linecap="round"/><rect x="16.7" y="28.7" width="14.6" height="17.6" rx="1" fill="#b9b9f2" fill-opacity="0.8" stroke="#8585e2" stroke-width="3.4"/></g>
<g transform="translate(450 323)" ><path d="M2.5 7.5L10 7.5" stroke="#666" stroke-width="3" stroke-linecap="round"/><path d="M38 7.5L45.5 7.5" stroke="#666" stroke-width="3" stroke-linecap="round"/><rect x="5.5" y="1.5" width="9" height="12" rx="1" fill="#c0c0f6" fill-opacity="0.85" stroke="#6a6aee" stroke-width="3"/><rect x="33.5" y="1.5" width="9" height="12" rx="1" fill="#c0c0f6" fill-opacity="0.85" stroke="#6a6aee" stroke-width="3"/><path d="M9 7.5L12 7.5" stroke="#666" stroke-width="2.6" stroke-linecap="round"/><path d="M36 7.5L39 7.5" stroke="#666" stroke-width="2.6" stroke-linecap="round"/><path d="M24 14.6V23.6" stroke="#000" stroke-width="3.4"/><path d="M16.8 22.0H31.2L24 29.6Z" fill="#000"/><path d="M2.5 40.5L45.5 40.5" stroke="#666" stroke-width="3" stroke-linecap="round"/><rect x="18.0" y="34.5" width="12" height="12" rx="1" fill="#b4b4f0" fill-opacity="0.85" stroke="#0000d4" stroke-width="3"/><path d="M19.5 40.5L28.5 40.5" stroke="#55559a" stroke-width="2.6" stroke-linecap="round"/></g>
<g transform="translate(561 323)" ><path d="M2.5 7.5L45.5 7.5" stroke="#666" stroke-width="3" stroke-linecap="round"/><rect x="18.0" y="1.5" width="12" height="12" rx="1" fill="#c0c0f6" fill-opacity="0.85" stroke="#6a6aee" stroke-width="3"/><path d="M19.5 7.5L28.5 7.5" stroke="#7d7dc0" stroke-width="2.6" stroke-linecap="round"/><path d="M24 18V27" stroke="#000" stroke-width="3.4"/><path d="M16.8 25.4H31.2L24 33Z" fill="#000"/><path d="M2.5 40.5L10 40.5" stroke="#666" stroke-width="3" stroke-linecap="round"/><path d="M38 40.5L45.5 40.5" stroke="#666" stroke-width="3" stroke-linecap="round"/><rect x="5.9" y="34.5" width="9" height="12" rx="1" fill="#b4b4f0" fill-opacity="0.85" stroke="#0000d4" stroke-width="3"/><rect x="33.1" y="34.5" width="9" height="12" rx="1" fill="#b4b4f0" fill-opacity="0.85" stroke="#0000d4" stroke-width="3"/><path d="M9 40.5L12.5 40.5" stroke="#55559a" stroke-width="2.6" stroke-linecap="round"/><path d="M35.5 40.5L39 40.5" stroke="#55559a" stroke-width="2.6" stroke-linecap="round"/></g>
<g transform="translate(714 323)" ><path d="M2.5 7.5L10 7.5" stroke="#666" stroke-width="3" stroke-linecap="round"/><path d="M38 7.5L45.5 7.5" stroke="#666" stroke-width="3" stroke-linecap="round"/><rect x="5.5" y="1.5" width="9" height="12" rx="1" fill="#c0c0f6" fill-opacity="0.85" stroke="#6a6aee" stroke-width="3"/><rect x="32.5" y="1.5" width="9" height="12" rx="1" fill="#c0c0f6" fill-opacity="0.85" stroke="#6a6aee" stroke-width="3"/><path d="M9 7.5L12 7.5" stroke="#666" stroke-width="2.6" stroke-linecap="round"/><path d="M35 7.5L38 7.5" stroke="#666" stroke-width="2.6" stroke-linecap="round"/><path d="M23.6 14.6V23.6" stroke="#000" stroke-width="3.4"/><path d="M16.400000000000002 22.0H30.8L23.6 29.6Z" fill="#000"/><path d="M2 40.5L46 40.5" stroke="#666" stroke-width="3" stroke-linecap="round"/><rect x="5.5" y="34.5" width="9" height="12" rx="1" fill="#b4b4f0" fill-opacity="0.85" stroke="#0000d4" stroke-width="3"/><rect x="32.5" y="34.5" width="9" height="12" rx="1" fill="#b4b4f0" fill-opacity="0.85" stroke="#0000d4" stroke-width="3"/><path d="M7 40.5L13 40.5" stroke="#55559a" stroke-width="2.6" stroke-linecap="round"/><path d="M34 40.5L40 40.5" stroke="#55559a" stroke-width="2.6" stroke-linecap="round"/></g>
<g transform="translate(825 323)" ><path d="M2 7.5L46 7.5" stroke="#666" stroke-width="3" stroke-linecap="round"/><rect x="6.0" y="1.5" width="9" height="12" rx="1" fill="#c0c0f6" fill-opacity="0.85" stroke="#6a6aee" stroke-width="3"/><rect x="33.0" y="1.5" width="9" height="12" rx="1" fill="#c0c0f6" fill-opacity="0.85" stroke="#6a6aee" stroke-width="3"/><path d="M7.5 7.5L13.5 7.5" stroke="#7d7dc0" stroke-width="2.6" stroke-linecap="round"/><path d="M34.5 7.5L40.5 7.5" stroke="#7d7dc0" stroke-width="2.6" stroke-linecap="round"/><path d="M24 14.6V23.6" stroke="#000" stroke-width="3.4"/><path d="M16.8 22.0H31.2L24 29.6Z" fill="#000"/><path d="M2.5 40.5L10 40.5" stroke="#666" stroke-width="3" stroke-linecap="round"/><path d="M38 40.5L45.5 40.5" stroke="#666" stroke-width="3" stroke-linecap="round"/><rect x="6.0" y="34.5" width="9" height="12" rx="1" fill="#b4b4f0" fill-opacity="0.85" stroke="#0000d4" stroke-width="3"/><rect x="33.0" y="34.5" width="9" height="12" rx="1" fill="#b4b4f0" fill-opacity="0.85" stroke="#0000d4" stroke-width="3"/><path d="M9 40.5L13 40.5" stroke="#55559a" stroke-width="2.6" stroke-linecap="round"/><path d="M35 40.5L39 40.5" stroke="#55559a" stroke-width="2.6" stroke-linecap="round"/></g>
<g transform="translate(978 323)" ><path d="M1.8 1C14 0.5 21 10 23.2 27" fill="none" stroke="#666" stroke-width="3" stroke-linecap="round"/><path d="M48 1C46.5 14 39 25 29 31" fill="none" stroke="#666" stroke-width="3" stroke-linecap="round"/><path d="M23.4 26L32 34.6L23.4 43.2L14.8 34.6Z" fill="#b4b4f0" stroke="#0000d4" stroke-width="3" stroke-linejoin="miter"/><path d="M23.5 31L26 35" fill="none" stroke="#55559a" stroke-width="2.6" stroke-linecap="round"/></g>
<g transform="translate(1089 323)" ><path d="M2.5 4C2.5 22 11 31 24 31C37 31 45.6 22 45.6 4" fill="none" stroke="#666" stroke-width="3" stroke-linecap="round"/><rect x="18.5" y="26.2" width="11" height="10.6" rx="1" fill="#b4b4f0" fill-opacity="0.85" stroke="#0000d4" stroke-width="3"/><path d="M20 31.3L28 31.3" stroke="#55559a" stroke-width="2.6" stroke-linecap="round"/></g>
<g transform="translate(1200 323)" ><path d="M2.8 4C2.8 22 12 31 25.5 31C38 31 48 22 48 4" fill="none" stroke="#666" stroke-width="3" stroke-linecap="round"/><path d="M6 33.9L44.8 33.9" stroke="#666" stroke-width="2.6" stroke-linecap="round"/><rect x="18.8" y="26.2" width="13.7" height="13.600000000000001" rx="1" fill="#b4b4f0" fill-opacity="0.85" stroke="#0000d4" stroke-width="3"/><path d="M20.5 33.2L31 33.2" stroke="#55559a" stroke-width="2.6" stroke-linecap="round"/><circle cx="6" cy="33.9" r="3.1" fill="#fff" stroke="#0000d4" stroke-width="2.4"/><circle cx="44.8" cy="33.9" r="3.1" fill="#fff" stroke="#0000d4" stroke-width="2.4"/></g>
<g transform="translate(1311 323)" ><path d="M2.2 4.3C2.2 22 11 32 24.8 32C38 32 47.7 22 47.7 4.3" fill="none" stroke="#666" stroke-width="3" stroke-linecap="round"/><circle cx="24.8" cy="32.9" r="6.8" fill="#b4b4f0" stroke="#0000d4" stroke-width="3"/><path d="M21 32.5L28.5 32.5" stroke="#55559a" stroke-width="2.6" stroke-linecap="round"/></g>
<g transform="translate(1464 323)" ><path d="M8.5 40.5L41.7 7.3" stroke="#666" stroke-width="3" stroke-linecap="round"/><rect x="2.9" y="34.9" width="11.2" height="11.2" rx="1" fill="#b4b4f0" fill-opacity="0.85" stroke="#0000d4" stroke-width="3"/><rect x="36.1" y="1.7" width="11.2" height="11.2" rx="1" fill="#b4b4f0" fill-opacity="0.85" stroke="#0000d4" stroke-width="3"/><path d="M7 42L10.5 38.5" stroke="#55559a" stroke-width="2.6" stroke-linecap="round"/><path d="M40 9L43.5 5.5" stroke="#55559a" stroke-width="2.6" stroke-linecap="round"/></g>
<g transform="translate(1575 323)" ><path d="M8.6 40C8.6 20 20 8.8 41 7.3" fill="none" stroke="#666" stroke-width="3" stroke-linecap="round"/><rect x="2.8" y="34.9" width="11.4" height="11.2" rx="1" fill="#b4b4f0" fill-opacity="0.85" stroke="#0000d4" stroke-width="3"/><rect x="35.5" y="1.7" width="11.4" height="11.2" rx="1" fill="#b4b4f0" fill-opacity="0.85" stroke="#0000d4" stroke-width="3"/><path d="M8.6 37L8.6 42" stroke="#55559a" stroke-width="2.6" stroke-linecap="round"/><path d="M39 7.4L43.5 7.4" stroke="#55559a" stroke-width="2.6" stroke-linecap="round"/></g>
<g transform="translate(1728 323)" ><path d="M22 3C8 1 -1 12 6 23" fill="none" stroke="#666" stroke-width="3" stroke-linecap="round"/><path d="M22.5 10V36Q23 45 33 45.5H38" fill="none" stroke="#666" stroke-width="3" stroke-linecap="round"/><path d="M15 27.5H40Q47.5 28 47.5 37" fill="none" stroke="#666" stroke-width="3" stroke-linecap="round"/><rect x="17.900000000000002" y="1.5" width="8.4" height="8.4" rx="1" fill="#b4b4f0" fill-opacity="0.85" stroke="#0000d4" stroke-width="2.6"/><rect x="5.6" y="22.5" width="8.700000000000001" height="8.8" rx="1" fill="#b4b4f0" fill-opacity="0.85" stroke="#0000d4" stroke-width="2.6"/><rect x="38.3" y="37.5" width="8.700000000000001" height="8.8" rx="1" fill="#b4b4f0" fill-opacity="0.85" stroke="#0000d4" stroke-width="2.6"/><path d="M21 4L24 8" stroke="#55559a" stroke-width="2.2" stroke-linecap="round"/><path d="M8 25.5L12 28.5" stroke="#55559a" stroke-width="2.2" stroke-linecap="round"/><path d="M41 43L44.5 40" stroke="#55559a" stroke-width="2.2" stroke-linecap="round"/></g>
<g transform="translate(1839 323)" ><path d="M47 1.5C25 2 6 16 5 41L21 47C23 28 38 17 52 16.5Z" fill="#b9c8f0" opacity="0.9"/><path d="M47 1.5C25 2 6 16 5 41" fill="none" stroke="#5a5aee" stroke-width="2.6" stroke-linecap="round"/><path d="M52 16.5C38 17 23 28 21 47" fill="none" stroke="#5a5aee" stroke-width="2.6" stroke-linecap="round"/><rect x="18.2" y="1.5" width="8.4" height="8.4" rx="1" fill="#b4b4f0" fill-opacity="0.85" stroke="#0000d4" stroke-width="2.6"/><rect x="2.6" y="16.5" width="8.9" height="8.8" rx="1" fill="#b4b4f0" fill-opacity="0.85" stroke="#0000d4" stroke-width="2.6"/><rect x="29.900000000000002" y="13.8" width="8.4" height="8.4" rx="1" fill="#b4b4f0" fill-opacity="0.85" stroke="#0000d4" stroke-width="2.6"/><rect x="14.600000000000001" y="28.8" width="8.6" height="8.4" rx="1" fill="#b4b4f0" fill-opacity="0.85" stroke="#0000d4" stroke-width="2.6"/></g>
<g transform="translate(2973 323)" ><path d="M20 45C26.5 35 22 26.5 16.7 22" fill="none" stroke="#000" stroke-width="3" stroke-linecap="round"/><path d="M22 15.6C31 24 39.5 24 46 20" fill="none" stroke="#000" stroke-width="3" stroke-linecap="round"/><path d="M6.6 41.7C12 22 26 9.5 43 5.8" fill="none" stroke="#1fe01f" stroke-width="3" stroke-linecap="round"/><circle cx="6.6" cy="41.7" r="3.3" fill="#fff" stroke="#0000d4" stroke-width="2.6" opacity="1"/><circle cx="43.1" cy="5.8" r="3.3" fill="#fff" stroke="#0000d4" stroke-width="2.6" opacity="1"/></g>
<g transform="translate(3085 323)" ><path d="M10 8C22 18 26 32 21 45" fill="none" stroke="#bbb" stroke-width="3" stroke-linecap="round"/><path d="M14 5C22 18 34 24 45 19" fill="none" stroke="#bbb" stroke-width="3" stroke-linecap="round"/><path d="M20 45C26.5 35 22 26.5 16.7 22" fill="none" stroke="#333" stroke-width="3" stroke-linecap="round"/><path d="M23 15.6C31 24 39.5 24 45 20" fill="none" stroke="#444" stroke-width="3" stroke-linecap="round"/><path d="M5.4 41.7C11 22 25 9.5 41.7 5.8" fill="none" stroke="#0000d4" stroke-width="3" stroke-linecap="round"/><circle cx="5.4" cy="41.7" r="3.3" fill="#fff" stroke="#0000d4" stroke-width="2.6" opacity="1"/><circle cx="41.7" cy="5.8" r="3.3" fill="#fff" stroke="#0000d4" stroke-width="2.6" opacity="1"/></g>
<g transform="translate(3197 323)" ><g opacity="0.32"><path d="M8.5 39C10 25 22 12 42 4" fill="none" stroke="#7a9a7a" stroke-width="2.6" stroke-linecap="round"/><path d="M9 38C6 24 12 16 16 15L15 24L22 9L23 18L31 4L30.5 14L40 4L37 14L22 30Z" fill="#9ab89a" stroke="#6f8f6f" stroke-width="1.5"/><circle cx="8.5" cy="40.5" r="3.3" fill="#fff" stroke="#5a5aee" stroke-width="2.6" opacity="1"/><circle cx="42.5" cy="4.5" r="3.3" fill="#fff" stroke="#5a5aee" stroke-width="2.6" opacity="1"/><path d="M27 22L44 34L27 46Z" fill="#f2e08a" stroke="#8a8a8a" stroke-width="2.6"/><path d="M46 20V47" stroke="#8a8a8a" stroke-width="3"/></g></g><path d="M193 338h36l-18 18z" fill="#8f8f8f" /><path d="M3376.5 338h35l-17.5 18z" fill="#8f8f8f" />
<path d="M93.7 442V489.4L103.6 480.8L111.8 497.5L121 493.8L112.6 476.6L125.6 475Z" fill="#000" stroke="#fff" stroke-width="2.6" stroke-linejoin="round"/>
<rect x="50.5" y="525.8" width="126" height="95.5" fill="#e4e3e1" rx="13" stroke="#cfcac6" stroke-width="2.5" />
<path d="M83.6 598C83.6 565 100 544.5 140.5 543.4" fill="none" stroke="#6e6e6e" stroke-width="3"/>
<rect x="87.1" y="547" width="17.3" height="16.8" fill="#8a8ae6" stroke="#0000d8" stroke-width="4"/>
<rect x="134.4" y="537.6" width="11.8" height="11.8" fill="#b4b4f2" stroke="#6464ee" stroke-width="2.8"/><path d="M137 543.5H141" stroke="#6a6ab0" stroke-width="2.4"/>
<rect x="77.7" y="594.4" width="11.8" height="11.8" fill="#b4b4f2" stroke="#6464ee" stroke-width="2.8"/><path d="M83.6 597V602" stroke="#6a6ab0" stroke-width="2.4"/>
<path d="M95.5 556.6L141.9 586.7L124.5 605.2Z" fill="#000" stroke="#fff" stroke-width="2.6" stroke-linejoin="round"/>
<rect x="49.3" y="643.7" width="128.7" height="3" fill="#dad8d6" />
<rect x="49.3" y="1195.5" width="128.7" height="3" fill="#dad8d6" />
<rect x="49.3" y="1645.9" width="128.7" height="3" fill="#dad8d6" />
<rect x="83.9" y="687.7" width="56.5" height="56.8" fill="#fff" stroke="#000" stroke-width="3"/>
<rect x="87.6" y="691.4" width="49" height="49.4" fill="url(#gRectTool)"/>
<circle cx="112.4" cy="818" r="28.3" fill="#fff" stroke="#000" stroke-width="3"/><circle cx="112.4" cy="818" r="24.6" fill="url(#gCirc)"/>
<path d="M100.2 888.8L121.4 902.9L113.2 932.7H86.1L78 905.6Z" fill="url(#gStar)" stroke="#000" stroke-width="2.8" stroke-linejoin="round"/>
<path d="M122.8 900.3L128.0 919.5L147.4 924.0L130.7 934.8L132.4 954.6L117.0 942.1L98.7 949.9L105.8 931.3L92.7 916.3L112.6 917.3Z" fill="url(#gStar)" stroke="#000" stroke-width="2.8" stroke-linejoin="miter"/>
<path d="M84.8 1000.5L119.2 987.0L118.6 1027.5L84.2 1038.5Z" fill="url(#gBoxL)"/><path d="M119.2 987.0L143.9 1009.2L143.1 1046.6L118.6 1027.5Z" fill="url(#gBoxR)"/><path d="M84.2 1038.5L118.6 1027.5L143.1 1046.6L110.5 1056.7Z" fill="url(#gBoxB)"/>
<path d="M119.2 987.0L143.9 1009.2L143.1 1046.6L110.5 1056.7L84.2 1038.5L84.8 1000.5Z" fill="none" stroke="#000" stroke-width="3" stroke-linejoin="round"/>
<path d="M87.6 1002.3L118.9 990.3L141.1 1010.4L140.4 1044.6L110.9 1053.6L87 1037Z" fill="none" stroke="#eeeefc" stroke-width="1.6" stroke-opacity="0.8"/>
<path d="M109.9 1126.3C110.9 1126.6 111.4 1125.6 112.9 1127.2C114.4 1128.9 114.6 1128.1 114.4 1131.2C114.1 1134.3 115.2 1134.0 112.2 1136.5C109.3 1139.0 110.0 1138.8 105.6 1138.6C101.2 1138.4 102.4 1139.4 99.0 1135.8C95.6 1132.3 96.0 1133.9 95.4 1127.9C94.7 1122.0 94.5 1123.5 97.0 1118.0C99.6 1112.5 98.4 1114.2 103.0 1111.4C107.6 1108.5 105.4 1109.2 110.9 1109.4C116.4 1109.6 114.5 1108.5 119.5 1112.0C124.6 1115.6 123.0 1113.6 126.1 1120.0C129.3 1126.4 128.9 1123.7 128.9 1131.2C128.9 1138.7 129.7 1135.6 126.1 1142.5C122.6 1149.3 125.0 1147.0 118.2 1151.7C111.4 1156.4 114.0 1156.3 105.6 1156.5C97.3 1156.7 100.3 1157.5 93.1 1152.4C85.8 1147.3 88.0 1149.7 83.8 1141.1C79.6 1132.5 80.6 1136.3 80.4 1126.6C80.1 1116.9 79.4 1120.9 83.1 1112.0C86.9 1103.2 85.1 1106.3 91.7 1100.1C98.4 1094.0 96.4 1096.2 103.0 1093.5C109.6 1090.9 105.0 1091.8 111.6 1092.2C118.2 1092.6 115.8 1091.3 122.8 1094.8C129.9 1098.4 127.0 1096.2 132.8 1102.8C138.5 1109.4 136.4 1106.3 140.0 1114.7C143.7 1123.1 142.7 1119.1 143.7 1127.9C144.7 1136.7 144.8 1132.6 143.0 1141.1C141.2 1149.6 139.9 1149.3 138.4 1153.4" fill="none" stroke="#000" stroke-width="3" stroke-linecap="round"/>
<path d="M80.3 1236H117.6" fill="none" stroke="#3a3a3a" stroke-width="3"/><path d="M80.3 1236C95.3 1254.3 111.5 1280 91.2 1296.4" fill="none" stroke="#1a1a1a" stroke-width="3"/>
<path d="M90 1299.4H108" stroke="#000" stroke-width="3"/>
<rect x="78.7" y="1291.3" width="10.1" height="10.2" fill="#fff" stroke="#000" stroke-width="3.4"/><rect x="108.2" y="1297" width="4.7" height="4.8" fill="#fff" stroke="#000" stroke-width="2.8"/>
<path d="M121 1274.7L113.6 1291Q114.5 1293.6 116.8 1292.6L123.9 1276.7Z" fill="#fff" stroke="#000" stroke-width="3" stroke-linejoin="round"/>
<path d="M118.3 1261.8L134.6 1268.6L130.5 1276.4L115.6 1270Z" fill="url(#gOrange)" stroke="#000" stroke-width="3" stroke-linejoin="round"/>
<path d="M125.8 1232.6Q140 1233 146.8 1250.9L140 1265.9L119.7 1260.4L116.3 1256.4Z" fill="url(#gSkyH)"/>
<path d="M125.8 1232.6L116.3 1256.4L119.7 1260.4L140 1265.9L146.8 1250.9" fill="none" stroke="#000" stroke-width="3.4" stroke-linejoin="round" stroke-linecap="round"/>
<path d="M130.5 1236.8L123.8 1254.4" stroke="#fff" stroke-opacity="0.85" stroke-width="2"/>
<path d="M79.7 1338.4C88 1336 96 1336 96 1342.5C96 1352 82 1362 80.3 1368.3C80 1371 95 1367 99.3 1369C103 1372 98 1385 98 1391.3" fill="none" stroke="#444" stroke-width="3" stroke-linecap="round"/>
<path d="M98 1391.3C98 1400 108 1404 118.3 1404.2C128 1404 136 1396 138.7 1386.6" fill="none" stroke="#000" stroke-width="3" stroke-linecap="round"/>
<path d="M123.1 1335Q138 1336 144.1 1353.3L135.3 1373.7L110.2 1364.2Z" fill="url(#gPencil)"/>
<path d="M110.2 1364.2L123 1362.3L135.3 1373.7L111.5 1398.1Z" fill="url(#gWood)"/>
<path d="M123.1 1335L110.2 1364.2L111.5 1398.1L135.3 1373.7L144.1 1353.3" fill="none" stroke="#000" stroke-width="3.4" stroke-linejoin="round" stroke-linecap="round"/>
<path d="M110.2 1364.2L123 1362.3L135.3 1373.7M123 1362.3L133 1372" fill="none" stroke="#c07a00" stroke-width="1.6"/>
<path d="M111 1386.8L119 1390.3L111.5 1398.1Z" fill="#000"/>
<path d="M129 1340L121 1357.5" stroke="#fff" stroke-opacity="0.85" stroke-width="2.2"/>
<path d="M76.3 1436.5C75.1 1438.1 80.6 1434.4 83.0 1441.7C85.4 1449.0 84.6 1448.9 84.4 1460.7C84.2 1472.5 81.6 1470.4 82.4 1481.0C83.2 1491.6 81.6 1488.7 87.1 1496.0C92.6 1503.3 91.7 1502.4 100.7 1505.4C109.7 1508.4 108.1 1507.7 117.0 1506.1C125.9 1504.5 124.0 1503.9 130.5 1500.0C137.0 1496.1 133.8 1494.0 138.7 1493.2C143.6 1492.4 146.4 1498.1 146.8 1497.3C147.2 1496.5 144.9 1491.5 140.0 1490.5C135.1 1489.5 136.6 1490.5 130.5 1493.9C124.4 1497.4 126.6 1499.4 119.7 1502.0C112.8 1504.6 113.6 1503.7 107.5 1502.7C101.4 1501.7 103.0 1503.2 99.3 1498.7C95.6 1494.2 95.3 1496.0 95.3 1487.8C95.3 1479.6 96.7 1481.7 99.3 1471.5C101.9 1461.3 104.1 1462.8 104.1 1453.9C104.1 1445.0 104.4 1447.0 99.3 1441.7C94.2 1436.4 94.0 1437.9 87.1 1436.3C80.2 1434.7 77.5 1434.9 76.3 1436.5Z" fill="#0a0a0a"/>
<path d="M117 1456.6L135.3 1462L136 1475.6L113.6 1496.6L107.5 1497.3V1466.1Z" fill="url(#gNib)" stroke="#000" stroke-width="3.6" stroke-linejoin="round"/>
<path d="M119.2 1473L112 1493.5" stroke="#000" stroke-width="2.6"/><rect x="116.2" y="1469.4" width="4.4" height="5" fill="#000"/>
<path d="M123.1 1437L146.8 1443.7L141.4 1460L117.6 1452.6Z" fill="url(#gSkyH)"/>
<path d="M123.9 1450.3L140.2 1455.1L138.7 1459.6L118.6 1453.9Z" fill="#c40000"/>
<path d="M123.7 1449.6L140.4 1454.5" stroke="#000" stroke-width="2.4"/>
<path d="M122.6 1436.6L117.2 1453.4M146.8 1443.7L141.4 1460.4" stroke="#000" stroke-width="3.4" stroke-linecap="round"/>
<text x='107.8' y='1600.6' font-family='"Liberation Sans", "DejaVu Sans", sans-serif' font-weight='bold' font-size='77' text-anchor='middle' fill='#0a0a0a' stroke='#0a0a0a' stroke-width='1.6' textLength='55.5' lengthAdjust='spacingAndGlyphs'>A</text>
<path d="M90 1596L106 1552" stroke="#777" stroke-width="2.2" stroke-linecap="round" opacity="0.8"/>
<rect x="130" y="1540" width="17" height="8" fill="#fff"/><rect x="130" y="1600" width="17" height="8" fill="#fff"/><rect x="136.5" y="1546" width="5" height="56" fill="#fff"/>
<path d="M139 1543.5V1604.5" stroke="#000" stroke-width="2.4"/><path d="M131 1542.6H146.5M131 1605.4H146.5" stroke="#000" stroke-width="2.4" stroke-dasharray="6 3"/>
<rect x="78.9" y="1685" width="66.1" height="66" fill="#fff"/>
<path d="M78.9 1685H145V1688H82V1751H78.9Z" fill="#4fb05a"/><path d="M145 1685V1751H78.9" fill="none" stroke="#e9f5ea" stroke-width="2"/>
<rect x="82" y="1688" width="60" height="60" fill="url(#gGrad)"/>
<path d="M93.5 1702.5L130 1733.5" stroke="#2a2a2a" stroke-width="3"/>
<rect x="87.8" y="1697.1" width="11.4" height="10.8" fill="#fff" stroke="#000" stroke-width="3"/><rect x="124.3" y="1728" width="11.4" height="10.9" fill="#fff" stroke="#000" stroke-width="3"/>
<path d="M106 1856.3V1892L123.8 1874.1Z" fill="#8f8f8f" />
<rect x="3338.5" y="423.7" width="105" height="98.49999999999997" fill="#e4e3e1" rx="14" stroke="#cfcac6" stroke-width="2.6" />
<rect x="3338.5" y="1138.6000000000001" width="105" height="96.99999999999986" fill="#e4e3e1" rx="14" stroke="#cfcac6" stroke-width="2.6" />
<rect x="3338.5" y="1452.5" width="105" height="97.00000000000009" fill="#e4e3e1" rx="14" stroke="#cfcac6" stroke-width="2.6" />
<rect x="3337" y="545.0" width="108" height="3" fill="#dad8d6" />
<rect x="3337" y="1110.9" width="108" height="3" fill="#dad8d6" />
<rect x="3337" y="1784.1" width="108" height="3" fill="#dad8d6" />
<path d="M3382 463.7L3394 475.7" stroke="#000" stroke-width="3"/><path d="M3399.5 481.2L3388.5 478.2L3396.5 470.2Z" fill="#000"/><path d="M3376 450.4L3383.3 457.7L3376 465.0L3368.7 457.7Z" fill="#b4b4f0" stroke="#0000d8" stroke-width="2.6" opacity="1"/><path d="M3406 480.4L3413.3 487.7L3406 495.0L3398.7 487.7Z" fill="#b4b4f0" stroke="#0a7a0a" stroke-width="2.6" opacity="1"/>
<path d="M3382 611L3394 623" stroke="#000" stroke-width="3"/><path d="M3399.5 628.5L3388.5 625.5L3396.5 617.5Z" fill="#000"/><path d="M3376 597.7L3383.3 605L3376 612.3L3368.7 605Z" fill="#b4b4f0" stroke="#0000d8" stroke-width="2.6" opacity="1"/><path d="M3406 627.7L3413.3 635L3406 642.3L3398.7 635Z" fill="#b4b4f0" stroke="#0a7a0a" stroke-width="2.6" opacity="1"/>
<path d="M3406 703V740" stroke="#c9dfcc" stroke-width="3" stroke-dasharray="5 3.2"/><path d="M3369 740H3406" stroke="#c9dfcc" stroke-width="3" stroke-dasharray="5 3.2"/>
<path d="M3406 807.5V837" stroke="#c4c4c4" stroke-width="3" stroke-dasharray="5 3.2"/><path d="M3369 845H3398" stroke="#c4c4c4" stroke-width="3" stroke-dasharray="5 3.2"/><path d="M3406 838L3413 845L3406 852L3399 845Z" fill="#e4e4f6" stroke="#c0dcc4" stroke-width="2.4" opacity="1"/>
<path d="M3406 913.6V950" stroke="#c4c4c4" stroke-width="3" stroke-dasharray="5 3.2"/><path d="M3369 950H3406" stroke="#c4c4c4" stroke-width="3" stroke-dasharray="5 3.2"/><circle cx="3406" cy="924.3" r="5.2" fill="none" stroke="#c0dcc4" stroke-width="2.6"/>
<path d="M3406 1017.9V1055.5" stroke="#c4c4c4" stroke-width="3" stroke-dasharray="5 3.2"/><path d="M3369 1055.5H3406" stroke="#c4c4c4" stroke-width="3" stroke-dasharray="5 3.2"/><circle cx="3379" cy="1029" r="5.2" fill="none" stroke="#c0dcc4" stroke-width="2.6"/>
<path d="M3382 1178L3394 1190" stroke="#000" stroke-width="3"/><path d="M3399.5 1195.5L3388.5 1192.5L3396.5 1184.5Z" fill="#000"/><path d="M3376 1164.7L3383.3 1172L3376 1179.3L3368.7 1172Z" fill="#b4b4f0" stroke="#0000d8" stroke-width="2.6" opacity="1"/><path d="M3406 1194.7L3413.3 1202L3406 1209.3L3398.7 1202Z" fill="#b4b4f0" stroke="#0a7a0a" stroke-width="2.6" opacity="1"/>
<path d="M3369 1273.5C3385 1275 3398 1285 3396 1298C3395 1305 3392 1309 3391 1309.5C3400 1311 3410 1305 3412 1294.5" fill="none" stroke="#0a7a0a" stroke-width="3.2" stroke-linecap="round"/>
<path d="M3370 1417.7L3412 1375.9M3370 1402.5L3412 1391.1" stroke="#666" stroke-width="3" stroke-linecap="round"/><circle cx="3391" cy="1396.3" r="5.2" fill="#b4b4f0" stroke="#0a7a0a" stroke-width="2.6"/>
<path d="M3369 1480.5C3385 1482 3398 1492 3396 1505C3395 1512 3392 1516 3391 1516.5C3400 1518 3410 1512 3412 1501.5" fill="none" stroke="#6a6a6a" stroke-width="3" stroke-linecap="round"/><path d="M3391 1509.1000000000001L3398.6 1516.7L3391 1524.3L3383.4 1516.7Z" fill="#b4b4f0" stroke="#0a7a0a" stroke-width="2.6" opacity="1"/>
<path d="M3369 1585.6C3380 1586.5 3388 1590 3392 1594C3399 1602 3398 1612 3391 1621.3C3400 1623 3410 1617 3412 1606" fill="none" stroke="#6a6a6a" stroke-width="3" stroke-linecap="round"/><rect x="3384.7" y="1586.2" width="11" height="11" fill="#b4b4f0" stroke="#0a7a0a" stroke-width="2.6"/>
<path d="M3370 1732.5L3412 1691" stroke="#666" stroke-width="3" stroke-linecap="round"/><path d="M3372.5 1716L3378.5 1733M3378.5 1711L3384.5 1728M3399 1691L3405 1708M3405 1686L3411 1703" stroke="#b00000" stroke-width="2.8" stroke-linecap="round"/><circle cx="3391" cy="1711.7" r="5.2" fill="#b4b4f0" stroke="#0a7a0a" stroke-width="2.6"/>
<path d="M3382 1856.5V1892.5L3400 1874.5Z" fill="#8f8f8f" />
<path d="M211 443.5V440A12 12 0 0 1 235 440V443.5" fill="none" stroke="#000" stroke-width="4.6"/>
<rect x="204.7" y="444.1" width="36.4" height="22.9" rx="1" fill="url(#gLockY)" stroke="#000" stroke-width="3"/>
<circle cx="223" cy="452.6" r="3.9" fill="#000"/><path d="M221.4 453L220.4 460.3H225.6L224.6 453Z" fill="#000"/>
<rect x="3235.4" y="435.3" width="29.2" height="29.6" rx="6" fill="url(#gBtn1)" stroke="#a9a9a9" stroke-width="1"/>
<path d="M3238 464.6Q3250 466.5 3262 464.6" fill="none" stroke="#6e6e6e" stroke-width="1.2"/>
<text x='3250' y='458.8' font-family='"Liberation Sans", "DejaVu Sans", sans-serif' font-weight='bold' font-size='25' text-anchor='middle' fill='#fff' stroke='#666' stroke-width='1.1'>1</text>
<clipPath id="cmsclip"><path d="M3234.6 1872C3238 1871 3243 1875 3270.9 1903.6L3240 1917.8C3237 1918.5 3232 1900 3230.5 1884C3230 1877 3231.5 1873 3234.6 1872Z"/></clipPath>
<g clip-path="url(#cmsclip)"><rect x="3228" y="1868" width="46" height="52" fill="#00e000"/><circle cx="3235" cy="1902" r="16" fill="url(#rCy)"/><circle cx="3258" cy="1892" r="13" fill="url(#rYe)"/><circle cx="3270" cy="1904" r="20" fill="url(#rRe)"/><circle cx="3238" cy="1918" r="20" fill="url(#rBl)"/><circle cx="3255" cy="1911" r="11" fill="url(#rMa)"/><circle cx="3248" cy="1901" r="8" fill="url(#rWh)"/></g>
<path d="M3234.6 1872C3238 1871 3243 1875 3270.9 1903.6L3240 1917.8C3237 1918.5 3232 1900 3230.5 1884C3230 1877 3231.5 1873 3234.6 1872Z" fill="none" stroke="#000" stroke-width="2.2" stroke-linejoin="round"/>
<path d="M824.1 2094.5Q836 2082.7 847.3 2082.7Q859 2082.7 870.5 2094.5Q859 2108.2 847.3 2108.2Q836 2108.2 824.1 2094.5Z" fill="url(#gEye)" stroke="#000" stroke-width="3.5" stroke-linejoin="round"/>
<circle cx="848.2" cy="2094.6" r="9.2" fill="#111"/><circle cx="844.6" cy="2090.2" r="2.7" fill="#fff"/>
<path d="M823.6 2081.4L829.5 2087.7M834.5 2072.7L837.3 2082.7M849.1 2070V2082.7M862.3 2074.1L857.3 2084.5M870 2082.7L865 2087.7" stroke="#000" stroke-width="3.2" stroke-linecap="round"/>
<path d="M966.8 2086C968 2072 955 2067 944.5 2075" fill="none" stroke="#000" stroke-width="4" stroke-linecap="round"/>
<path d="M937.7 2090.9L969.5 2085.5L973.6 2110.5L941.8 2115.5Z" fill="url(#gLockO)" stroke="#000" stroke-width="3.2" stroke-linejoin="round"/>
<circle cx="955" cy="2097.7" r="3.4" fill="#000"/><path d="M953.6 2098L954.2 2105.4L958.6 2104.6L956.6 2097.6Z" fill="#000"/>
<path d="M78.5 20.6Q80.6 20.6 82.2 22.2L100.2 40.4Q102.4 42.8 99.8 45Q94 49 86 49.5L72 49Q62 47.5 57.8 45Q55 42.8 57.2 40.4L74.8 22.2Q76.4 20.6 78.5 20.6Z" fill="#050505"/>
<path d="M78.5 22.9Q79.6 22.9 80.8 24.1L98.3 41.8Q99.5 43.2 97.9 44.4Q93 47.2 88 48L64 46Q60.5 45 59.1 44.4Q57.5 43.2 58.7 41.8L76.2 24.1Q77.4 22.9 78.5 22.9Z" fill="url(#gLogo)"/>
<path d="M58.9 43.9L66 36.8L72.5 37L71 48Q62 46 58.9 43.9Z" fill="url(#gLogoG)"/>
<path d="M69.5 47.5L72 40L73.8 33.2L75.4 38L78.5 36.2L82 35.4L86 37.2L89.5 41.2L96 45.6Q90 48.6 84 49H71Z" fill="#050505"/>
<path d="M62.5 50.5Q66 47.8 72 48.6L86 48.2Q92 50.5 91 53Q88 55 86 56.5Q85 60 84.5 63Q80 65.5 76.5 63.5Q75 60.5 72 59Q70.5 55.5 66.5 53Q63 52 62.5 50.5Z" fill="#070707"/>
<path d="M67 50.6Q73 48.8 81 50.2" stroke="#cfcfcf" stroke-width="1.3" fill="none" stroke-linecap="round"/>
<path d="M80 52Q86 51.5 89 53Q86 55.5 82 57Z" fill="#1c2836"/>
<ellipse cx="67.8" cy="57.5" rx="2.2" ry="1.5" fill="#070707"/><ellipse cx="97" cy="53.9" rx="2.9" ry="1.8" fill="#070707"/><ellipse cx="93.6" cy="57.3" rx="1.6" ry="1.3" fill="#070707"/>
</svg>
</body></html>
